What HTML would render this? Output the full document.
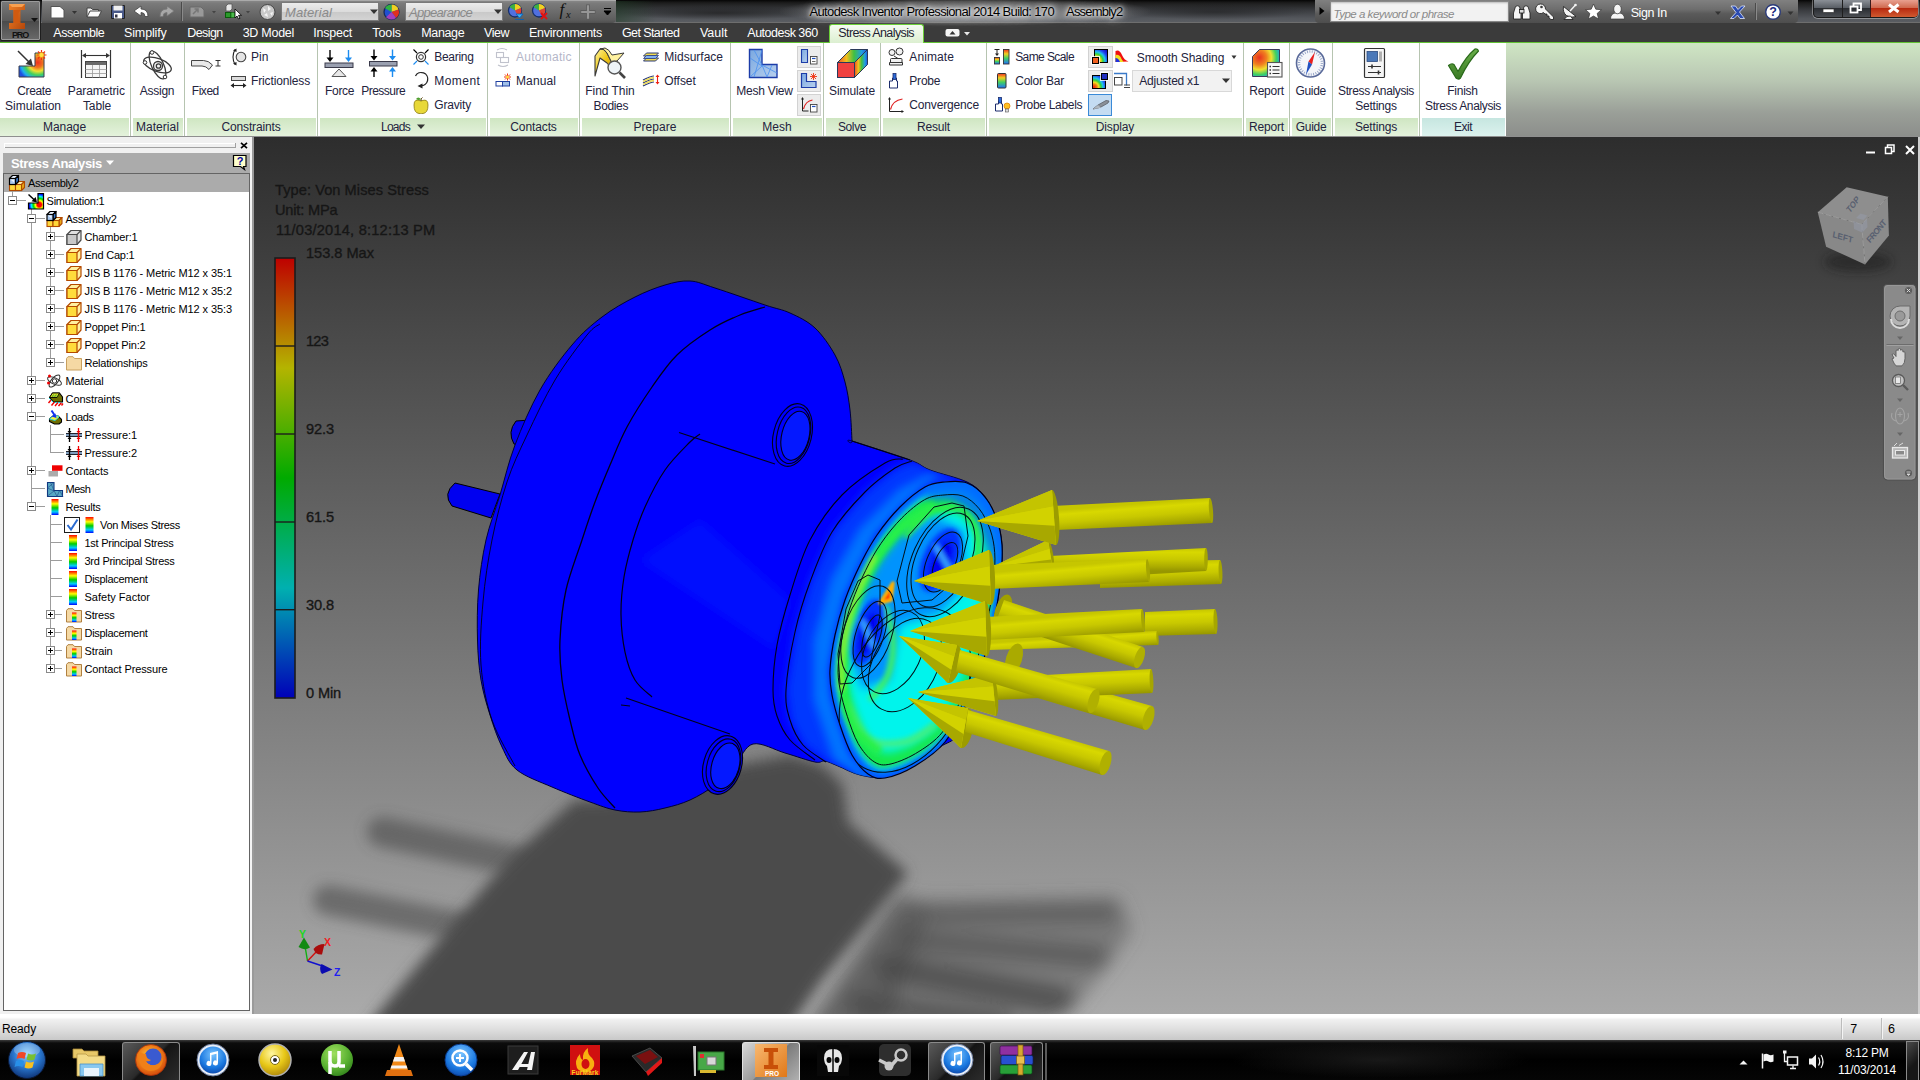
<!DOCTYPE html>
<html><head><meta charset="utf-8"><title>Autodesk Inventor Professional 2014 - Assembly2</title>
<style>
html,body{margin:0;padding:0;background:#3c3c3c;}
body{width:1920px;height:1080px;position:relative;overflow:hidden;font-family:"Liberation Sans",sans-serif;}
.b{position:absolute;display:block;}
.t{position:absolute;white-space:pre;line-height:normal;}
</style></head><body>
<div class="b" style="left:254px;top:137px;width:1666px;height:877px;background:linear-gradient(#2d2d2d 0%,#aaaaaa 100%);"></div>
<svg class="b" style="left:254px;top:137px" width="1666" height="877" viewBox="254 137 1666 877"><defs>
<filter id="bl18" filterUnits="userSpaceOnUse" x="254" y="137" width="1666" height="900"><feGaussianBlur stdDeviation="9"/></filter>
<filter id="bl8" filterUnits="userSpaceOnUse" x="254" y="137" width="1666" height="900"><feGaussianBlur stdDeviation="7"/></filter>
<filter id="bl6" filterUnits="userSpaceOnUse" x="254" y="137" width="1666" height="900"><feGaussianBlur stdDeviation="5"/></filter>
<filter id="bl2" filterUnits="userSpaceOnUse" x="254" y="137" width="1666" height="900"><feGaussianBlur stdDeviation="1.2"/></filter>
<filter id="bl3" filterUnits="userSpaceOnUse" x="254" y="137" width="1666" height="900"><feGaussianBlur stdDeviation="2.5"/></filter>
<linearGradient id="leg" x1="0" y1="0" x2="0" y2="1">
<stop offset="0" stop-color="#be0000"/><stop offset="0.25" stop-color="#b4b400"/><stop offset="0.5" stop-color="#00aa00"/><stop offset="0.75" stop-color="#00b0b0"/><stop offset="1" stop-color="#0000b8"/></linearGradient>
<linearGradient id="shY" x1="0" y1="0" x2="0" y2="1"><stop offset="0" stop-color="#e4e400"/><stop offset="0.45" stop-color="#d0d000"/><stop offset="1" stop-color="#9c9c00"/></linearGradient>
</defs>
<g filter="url(#bl8)" opacity=".5">
<path d="M382 832L520 862" stroke="#3c3c3c" stroke-width="30" stroke-linecap="round"/>
<path d="M328 900L465 928" stroke="#3c3c3c" stroke-width="30" stroke-linecap="round"/>
</g>
<g filter="url(#bl18)">
<path d="M898.0 895.0L930.0 905.0L885.0 1030.0L805.0 1030.0Z" fill="#585858" opacity=".85"/>
<path d="M915.0 903.0L1118.0 898.0L1132.0 930.0L1110.0 962.0L1080.0 1002.0L1040.0 1030.0L860.0 1030.0L890.0 962.0Z" fill="#565656" opacity=".5"/>
<path d="M928 913L1108 911" stroke="#505050" stroke-width="22" stroke-linecap="round" opacity=".6"/>
<path d="M908 940L1098 957" stroke="#4c4c4c" stroke-width="22" stroke-linecap="round" opacity=".65"/>
<path d="M888 968L1060 1000" stroke="#464646" stroke-width="28" stroke-linecap="round" opacity=".75"/>
<path d="M860 1004L1000 1024" stroke="#484848" stroke-width="26" stroke-linecap="round" opacity=".7"/>
</g>
<g filter="url(#bl8)">
<path d="M602.0 800.0L640.0 790.0L735.0 765.0L790.0 755.0L822.0 765.0L843.0 785.0L848.0 822.0L908.0 873.0L822.0 980.0L788.0 1030.0L365.0 1030.0L379.0 1012.0L435.0 945.0L494.0 876.0L530.0 840.0L575.0 800.0Z" fill="#4b4b4b"/>
</g>
<path d="M455 483 L500 494 L491 518 L452 506 Q442 494 455 483Z" fill="#0000f0" stroke="#000" stroke-width="1"/>
<path d="M516 421 L530 420 L522 446 L514 444 Q507 432 516 421Z" fill="#0000f0" stroke="#000" stroke-width="1"/>
<path d="M690.0 281.0C698.3 281.5 702.5 284.0 715.0 288.0C727.5 292.0 752.5 300.8 765.0 305.0C777.5 309.2 781.7 309.2 790.0 313.0C798.3 316.8 807.5 321.0 815.0 328.0C822.5 335.0 830.0 346.0 835.0 355.0C840.0 364.0 842.5 372.8 845.0 382.0C847.5 391.2 848.8 400.2 850.0 410.0C851.2 419.8 851.7 435.8 852.0 441.0C852.3 446.2 842.3 437.8 852.0 441.0C861.7 444.2 897.0 455.2 910.0 460.0C923.0 464.8 920.5 466.3 930.0 470.0C939.5 473.7 957.8 477.5 967.0 482.0C976.2 486.5 980.0 490.7 985.0 497.0C990.0 503.3 994.2 512.0 997.0 520.0C999.8 528.0 1001.3 535.8 1002.0 545.0C1002.7 554.2 1002.0 564.2 1001.0 575.0C1000.0 585.8 998.7 596.7 996.0 610.0C993.3 623.3 989.7 640.0 985.0 655.0C980.3 670.0 972.7 686.7 968.0 700.0C963.3 713.3 961.7 727.2 957.0 735.0C952.3 742.8 947.0 742.0 940.0 747.0C933.0 752.0 924.2 760.0 915.0 765.0C905.8 770.0 894.2 775.3 885.0 777.0C875.8 778.7 867.8 776.8 860.0 775.0C852.2 773.2 843.8 768.3 838.0 766.0C832.2 763.7 828.8 761.7 825.0 761.0C821.2 760.3 821.7 763.3 815.0 762.0C808.3 760.7 795.3 756.0 785.0 753.0C774.7 750.0 761.3 742.0 753.0 744.0C744.7 746.0 741.3 758.2 735.0 765.0C728.7 771.8 722.5 779.2 715.0 785.0C707.5 790.8 698.3 796.2 690.0 800.0C681.7 803.8 673.3 806.0 665.0 808.0C656.7 810.0 648.3 811.7 640.0 812.0C631.7 812.3 623.3 811.7 615.0 810.0C606.7 808.3 600.5 805.8 590.0 802.0C579.5 798.2 564.2 792.3 552.0 787.0C539.8 781.7 525.3 776.7 517.0 770.0C508.7 763.3 506.5 756.2 502.0 747.0C497.5 737.8 493.5 726.2 490.0 715.0C486.5 703.8 483.1 692.5 481.0 680.0C478.9 667.5 477.9 655.0 477.5 640.0C477.1 625.0 477.1 606.7 478.5 590.0C479.9 573.3 482.4 555.8 486.0 540.0C489.6 524.2 495.2 510.8 500.0 495.0C504.8 479.2 508.3 462.5 515.0 445.0C521.7 427.5 530.5 406.7 540.0 390.0C549.5 373.3 561.7 357.2 572.0 345.0C582.3 332.8 591.5 325.0 602.0 317.0C612.5 309.0 624.5 302.3 635.0 297.0C645.5 291.7 655.8 287.7 665.0 285.0C674.2 282.3 681.7 280.5 690.0 281.0Z" fill="#0000fe" stroke="#00003a" stroke-width="1"/>
<clipPath id="cSil"><path d="M690.0 281.0C698.3 281.5 702.5 284.0 715.0 288.0C727.5 292.0 752.5 300.8 765.0 305.0C777.5 309.2 781.7 309.2 790.0 313.0C798.3 316.8 807.5 321.0 815.0 328.0C822.5 335.0 830.0 346.0 835.0 355.0C840.0 364.0 842.5 372.8 845.0 382.0C847.5 391.2 848.8 400.2 850.0 410.0C851.2 419.8 851.7 435.8 852.0 441.0C852.3 446.2 842.3 437.8 852.0 441.0C861.7 444.2 897.0 455.2 910.0 460.0C923.0 464.8 920.5 466.3 930.0 470.0C939.5 473.7 957.8 477.5 967.0 482.0C976.2 486.5 980.0 490.7 985.0 497.0C990.0 503.3 994.2 512.0 997.0 520.0C999.8 528.0 1001.3 535.8 1002.0 545.0C1002.7 554.2 1002.0 564.2 1001.0 575.0C1000.0 585.8 998.7 596.7 996.0 610.0C993.3 623.3 989.7 640.0 985.0 655.0C980.3 670.0 972.7 686.7 968.0 700.0C963.3 713.3 961.7 727.2 957.0 735.0C952.3 742.8 947.0 742.0 940.0 747.0C933.0 752.0 924.2 760.0 915.0 765.0C905.8 770.0 894.2 775.3 885.0 777.0C875.8 778.7 867.8 776.8 860.0 775.0C852.2 773.2 843.8 768.3 838.0 766.0C832.2 763.7 828.8 761.7 825.0 761.0C821.2 760.3 821.7 763.3 815.0 762.0C808.3 760.7 795.3 756.0 785.0 753.0C774.7 750.0 761.3 742.0 753.0 744.0C744.7 746.0 741.3 758.2 735.0 765.0C728.7 771.8 722.5 779.2 715.0 785.0C707.5 790.8 698.3 796.2 690.0 800.0C681.7 803.8 673.3 806.0 665.0 808.0C656.7 810.0 648.3 811.7 640.0 812.0C631.7 812.3 623.3 811.7 615.0 810.0C606.7 808.3 600.5 805.8 590.0 802.0C579.5 798.2 564.2 792.3 552.0 787.0C539.8 781.7 525.3 776.7 517.0 770.0C508.7 763.3 506.5 756.2 502.0 747.0C497.5 737.8 493.5 726.2 490.0 715.0C486.5 703.8 483.1 692.5 481.0 680.0C478.9 667.5 477.9 655.0 477.5 640.0C477.1 625.0 477.1 606.7 478.5 590.0C479.9 573.3 482.4 555.8 486.0 540.0C489.6 524.2 495.2 510.8 500.0 495.0C504.8 479.2 508.3 462.5 515.0 445.0C521.7 427.5 530.5 406.7 540.0 390.0C549.5 373.3 561.7 357.2 572.0 345.0C582.3 332.8 591.5 325.0 602.0 317.0C612.5 309.0 624.5 302.3 635.0 297.0C645.5 291.7 655.8 287.7 665.0 285.0C674.2 282.3 681.7 280.5 690.0 281.0Z"/></clipPath>
<clipPath id="cFace"><path d="M925.0 487.0C932.5 482.8 938.0 482.7 945.0 482.0C952.0 481.3 960.3 480.5 967.0 483.0C973.7 485.5 980.0 490.8 985.0 497.0C990.0 503.2 994.2 512.0 997.0 520.0C999.8 528.0 1001.3 535.8 1002.0 545.0C1002.7 554.2 1002.0 564.2 1001.0 575.0C1000.0 585.8 998.7 596.7 996.0 610.0C993.3 623.3 989.7 640.0 985.0 655.0C980.3 670.0 974.7 685.5 968.0 700.0C961.3 714.5 953.8 731.0 945.0 742.0C936.2 753.0 925.0 760.0 915.0 766.0C905.0 772.0 892.8 776.7 885.0 778.0C877.2 779.3 873.5 777.8 868.0 774.0C862.5 770.2 856.7 763.2 852.0 755.0C847.3 746.8 843.3 735.0 840.0 725.0C836.7 715.0 833.7 704.2 832.0 695.0C830.3 685.8 829.5 680.0 830.0 670.0C830.5 660.0 832.5 646.7 835.0 635.0C837.5 623.3 840.8 611.7 845.0 600.0C849.2 588.3 854.7 575.8 860.0 565.0C865.3 554.2 870.3 544.7 877.0 535.0C883.7 525.3 892.0 515.0 900.0 507.0C908.0 499.0 917.5 491.2 925.0 487.0Z"/></clipPath>
<g clip-path="url(#cSil)">
<g filter="url(#bl6)">
<path d="M912.0 461.0L895.0 468.0L865.0 492.0L832.0 532.0L810.0 582.0L795.0 632.0L786.0 690.0L790.0 720.0L803.0 745.0L826.0 762.0L860.0 775.0L885.0 778.0L852.0 755.0L832.0 695.0L830.0 670.0L845.0 600.0L877.0 535.0L925.0 487.0L967.0 483.0Z" fill="#0038ff"/>
<path d="M925.0 487.0L900.0 507.0L877.0 535.0L860.0 565.0L845.0 600.0L835.0 635.0L830.0 670.0L832.0 695.0L840.0 725.0L852.0 755.0L868.0 774.0L885.0 778.0L870.0 790.0L835.0 760.0L815.0 700.0L815.0 640.0L832.0 580.0L860.0 530.0L900.0 490.0L940.0 470.0Z" fill="#0088ff" opacity="0.75"/>
<path d="M640.0 560.0L700.0 520.0L790.0 600.0L775.0 650.0L700.0 600.0Z" fill="#0028ff" opacity="0.35"/>
</g></g>
<g clip-path="url(#cFace)">
<path d="M925.0 487.0C932.5 482.8 938.0 482.7 945.0 482.0C952.0 481.3 960.3 480.5 967.0 483.0C973.7 485.5 980.0 490.8 985.0 497.0C990.0 503.2 994.2 512.0 997.0 520.0C999.8 528.0 1001.3 535.8 1002.0 545.0C1002.7 554.2 1002.0 564.2 1001.0 575.0C1000.0 585.8 998.7 596.7 996.0 610.0C993.3 623.3 989.7 640.0 985.0 655.0C980.3 670.0 974.7 685.5 968.0 700.0C961.3 714.5 953.8 731.0 945.0 742.0C936.2 753.0 925.0 760.0 915.0 766.0C905.0 772.0 892.8 776.7 885.0 778.0C877.2 779.3 873.5 777.8 868.0 774.0C862.5 770.2 856.7 763.2 852.0 755.0C847.3 746.8 843.3 735.0 840.0 725.0C836.7 715.0 833.7 704.2 832.0 695.0C830.3 685.8 829.5 680.0 830.0 670.0C830.5 660.0 832.5 646.7 835.0 635.0C837.5 623.3 840.8 611.7 845.0 600.0C849.2 588.3 854.7 575.8 860.0 565.0C865.3 554.2 870.3 544.7 877.0 535.0C883.7 525.3 892.0 515.0 900.0 507.0C908.0 499.0 917.5 491.2 925.0 487.0Z" fill="#0058ff"/>
<g filter="url(#bl3)">
<path d="M924.7 493.1C931.9 489.1 937.2 489.0 943.9 488.3C950.6 487.7 958.6 486.9 965.0 489.3C971.4 491.7 977.5 496.8 982.3 502.7C987.1 508.6 991.1 517.1 993.8 524.8C996.5 532.5 998.0 540.0 998.6 548.8C999.2 557.6 998.6 567.2 997.6 577.6C996.7 588.0 995.4 598.4 992.8 611.2C990.3 624.0 986.8 640.0 982.3 654.4C977.8 668.8 972.4 683.7 966.0 697.6C959.6 711.5 952.4 727.4 943.9 737.9C935.4 748.5 924.7 755.2 915.1 761.0C905.5 766.7 893.8 771.2 886.3 772.5C878.8 773.8 875.2 772.3 870.0 768.6C864.7 765.0 859.1 758.2 854.6 750.4C850.1 742.6 846.3 731.2 843.1 721.6C839.9 712.0 837.0 701.6 835.4 692.8C833.8 684.0 833.0 678.4 833.5 668.8C834.0 659.2 835.9 646.4 838.3 635.2C840.7 624.0 843.9 612.8 847.9 601.6C851.9 590.4 857.2 578.4 862.3 568.0C867.4 557.6 872.2 548.5 878.6 539.2C885.0 529.9 893.0 520.0 900.7 512.3C908.4 504.6 917.5 497.1 924.7 493.1Z" fill="#00a0ff"/>
<path d="M924.4 497.7C931.4 493.8 936.5 493.7 943.0 493.1C949.5 492.4 957.3 491.7 963.5 494.0C969.7 496.3 975.6 501.3 980.2 507.0C984.9 512.7 988.8 521.0 991.4 528.4C994.0 535.8 995.4 543.1 996.0 551.6C996.7 560.2 996.0 569.5 995.1 579.5C994.2 589.6 993.0 599.7 990.5 612.1C988.0 624.5 984.6 640.0 980.2 654.0C975.9 667.9 970.6 682.3 964.4 695.8C958.2 709.3 951.3 724.6 943.0 734.9C934.8 745.1 924.4 751.6 915.1 757.2C905.8 762.8 894.5 767.1 887.2 768.3C880.0 769.6 876.5 768.2 871.4 764.6C866.3 761.1 860.9 754.5 856.5 747.0C852.2 739.4 848.5 728.3 845.4 719.0C842.3 709.8 839.5 699.7 838.0 691.1C836.4 682.6 835.6 677.2 836.1 667.9C836.6 658.6 838.4 646.2 840.7 635.4C843.1 624.5 846.2 613.6 850.0 602.8C853.9 591.9 859.0 580.3 864.0 570.2C869.0 560.2 873.6 551.3 879.8 542.4C886.0 533.4 893.8 523.8 901.2 516.3C908.6 508.9 917.5 501.6 924.4 497.7Z" fill="#18e848"/>
</g>
<g filter="url(#bl6)">
<path d="M923.5 516.5C929.6 513.1 934.0 512.9 939.7 512.4C945.3 511.9 952.1 511.2 957.5 513.2C962.9 515.2 968.0 519.6 972.1 524.5C976.1 529.5 979.5 536.7 981.8 543.2C984.1 549.7 985.3 556.0 985.9 563.4C986.4 570.9 985.8 579.0 985.0 587.7C984.2 596.5 983.1 605.3 981.0 616.1C978.8 626.9 975.9 640.4 972.1 652.5C968.3 664.7 963.7 677.2 958.3 689.0C952.9 700.7 946.8 714.1 939.7 723.0C932.5 731.9 923.5 737.6 915.4 742.4C907.3 747.3 897.4 751.1 891.1 752.2C884.7 753.2 881.8 752.0 877.3 748.9C872.9 745.8 868.1 740.1 864.4 733.5C860.6 726.9 857.3 717.3 854.6 709.2C851.9 701.1 849.5 692.4 848.1 684.9C846.8 677.5 846.1 672.8 846.5 664.7C846.9 656.6 848.6 645.8 850.6 636.3C852.6 626.9 855.3 617.4 858.7 608.0C862.1 598.5 866.5 588.4 870.8 579.6C875.2 570.9 879.2 563.2 884.6 555.3C890.0 547.5 896.8 539.1 903.2 532.6C909.7 526.2 917.4 519.8 923.5 516.5Z" fill="#00f4ec"/>
<path d="M925.0 470.0L1010.0 470.0L1010.0 600.0L990.0 560.0L975.0 520.0L950.0 500.0L925.0 500.0Z" fill="#0070ff" opacity=".85"/>
<path d="M935.0 515.0L965.0 530.0L968.0 585.0L940.0 615.0L900.0 625.0L890.0 680.0L862.0 690.0L846.0 650.0L856.0 600.0L880.0 560.0L905.0 530.0Z" fill="#0088ff" opacity=".9"/>
</g>
<g filter="url(#bl3)">
<path d="M905.0 537.0C909.2 532.8 921.2 516.8 930.0 512.0C938.8 507.2 950.7 505.8 958.0 508.0C965.3 510.2 970.7 518.0 974.0 525.0C977.3 532.0 978.7 540.8 978.0 550.0C977.3 559.2 971.3 575.0 970.0 580.0" fill="none" stroke="#30f040" stroke-width="6"/>
<path d="M885.0 605.0C886.3 610.8 892.5 628.3 893.0 640.0C893.5 651.7 891.8 665.0 888.0 675.0C884.2 685.0 873.0 695.8 870.0 700.0" fill="none" stroke="#40f060" stroke-width="6"/>
<path d="M846.0 700.0C849.7 706.3 858.2 731.0 868.0 738.0C877.8 745.0 893.8 744.2 905.0 742.0C916.2 739.8 930.0 727.8 935.0 725.0" fill="none" stroke="#50f070" stroke-width="7" opacity=".8"/>
<path d="M935.0 505.0C930.0 508.2 914.5 515.5 905.0 524.0C895.5 532.5 886.0 543.3 878.0 556.0C870.0 568.7 862.5 584.3 857.0 600.0C851.5 615.7 847.2 634.2 845.0 650.0C842.8 665.8 842.2 681.7 844.0 695.0C845.8 708.3 850.0 720.5 856.0 730.0C862.0 739.5 876.0 748.3 880.0 752.0" fill="none" stroke="#28f048" stroke-width="9"/>
<path d="M874.0 556.0C870.7 563.3 859.3 584.7 854.0 600.0C848.7 615.3 844.2 633.0 842.0 648.0C839.8 663.0 841.2 683.0 841.0 690.0" fill="none" stroke="#b8f000" stroke-width="3"/>
<ellipse cx="940" cy="560" rx="17" ry="34" transform="rotate(24 940 560)" fill="#0030ff"/>
<ellipse cx="941" cy="562" rx="9" ry="22" transform="rotate(24 941 562)" fill="#0000f0"/>
<ellipse cx="868" cy="632" rx="15" ry="34" transform="rotate(18 868 632)" fill="#0030ff"/>
<ellipse cx="868" cy="634" rx="8" ry="22" transform="rotate(18 868 634)" fill="#0000f0"/>
<path d="M935 545 L950 570" stroke="#40c0ff" stroke-width="4"/><path d="M862 620 L874 648" stroke="#40c0ff" stroke-width="4"/>
</g>
<g filter="url(#bl2)"><path d="M880 603 L893 583 L891 600Z" fill="#ff2000" stroke="#ffb000" stroke-width="3.5" stroke-linejoin="round"/></g>
</g>
<path d="M765.0 307.0C760.8 308.3 749.2 311.2 740.0 315.0C730.8 318.8 720.5 323.3 710.0 330.0C699.5 336.7 686.7 345.5 677.0 355.0C667.3 364.5 660.3 375.0 652.0 387.0C643.7 399.0 634.0 414.0 627.0 427.0C620.0 440.0 615.3 452.5 610.0 465.0C604.7 477.5 599.7 489.5 595.0 502.0C590.3 514.5 586.8 525.3 582.0 540.0C577.2 554.7 569.7 573.3 566.0 590.0C562.3 606.7 560.7 625.0 560.0 640.0C559.3 655.0 560.3 666.7 562.0 680.0C563.7 693.3 567.0 707.5 570.0 720.0C573.0 732.5 575.3 743.7 580.0 755.0C584.7 766.3 592.2 779.2 598.0 788.0C603.8 796.8 612.2 804.7 615.0 808.0" fill="none" stroke="#000018" stroke-width="1.3"/>
<path d="M600.0 324.0C597.8 325.8 594.5 325.7 587.0 335.0C579.5 344.3 565.0 363.3 555.0 380.0C545.0 396.7 535.0 418.0 527.0 435.0C519.0 452.0 512.8 464.5 507.0 482.0C501.2 499.5 496.0 520.0 492.0 540.0C488.0 560.0 484.8 581.2 483.0 602.0C481.2 622.8 479.5 645.3 481.0 665.0C482.5 684.7 486.3 703.2 492.0 720.0C497.7 736.8 511.2 758.3 515.0 766.0" fill="none" stroke="#000018" stroke-width="0.9"/>
<path d="M700.0 434.0C698.3 435.3 695.8 436.0 690.0 442.0C684.2 448.0 672.5 459.2 665.0 470.0C657.5 480.8 650.3 495.3 645.0 507.0C639.7 518.7 636.5 528.3 633.0 540.0C629.5 551.7 626.0 564.5 624.0 577.0C622.0 589.5 620.8 602.5 621.0 615.0C621.2 627.5 622.7 641.2 625.0 652.0C627.3 662.8 630.5 672.5 635.0 680.0C639.5 687.5 649.2 694.2 652.0 697.0" fill="none" stroke="#000018" stroke-width="1.2"/>
<path d="M903.0 459.0C900.0 459.7 895.2 457.0 885.0 463.0C874.8 469.0 854.5 482.2 842.0 495.0C829.5 507.8 818.7 523.3 810.0 540.0C801.3 556.7 795.5 577.5 790.0 595.0C784.5 612.5 779.8 629.2 777.0 645.0C774.2 660.8 773.0 678.2 773.0 690.0C773.0 701.8 774.2 707.7 777.0 716.0C779.8 724.3 783.7 732.7 790.0 740.0C796.3 747.3 810.8 756.7 815.0 760.0" fill="none" stroke="#000018" stroke-width="1.1"/>
<path d="M912.0 461.0C909.2 462.2 902.8 462.8 895.0 468.0C887.2 473.2 875.5 481.3 865.0 492.0C854.5 502.7 841.2 517.0 832.0 532.0C822.8 547.0 816.2 565.3 810.0 582.0C803.8 598.7 799.0 614.0 795.0 632.0C791.0 650.0 786.8 675.3 786.0 690.0C785.2 704.7 787.2 710.8 790.0 720.0C792.8 729.2 797.0 738.0 803.0 745.0C809.0 752.0 822.2 759.2 826.0 762.0" fill="none" stroke="#000018" stroke-width="1.1"/>
<path d="M925.0 487.0C932.5 482.8 938.0 482.7 945.0 482.0C952.0 481.3 960.3 480.5 967.0 483.0C973.7 485.5 980.0 490.8 985.0 497.0C990.0 503.2 994.2 512.0 997.0 520.0C999.8 528.0 1001.3 535.8 1002.0 545.0C1002.7 554.2 1002.0 564.2 1001.0 575.0C1000.0 585.8 998.7 596.7 996.0 610.0C993.3 623.3 989.7 640.0 985.0 655.0C980.3 670.0 974.7 685.5 968.0 700.0C961.3 714.5 953.8 731.0 945.0 742.0C936.2 753.0 925.0 760.0 915.0 766.0C905.0 772.0 892.8 776.7 885.0 778.0C877.2 779.3 873.5 777.8 868.0 774.0C862.5 770.2 856.7 763.2 852.0 755.0C847.3 746.8 843.3 735.0 840.0 725.0C836.7 715.0 833.7 704.2 832.0 695.0C830.3 685.8 829.5 680.0 830.0 670.0C830.5 660.0 832.5 646.7 835.0 635.0C837.5 623.3 840.8 611.7 845.0 600.0C849.2 588.3 854.7 575.8 860.0 565.0C865.3 554.2 870.3 544.7 877.0 535.0C883.7 525.3 892.0 515.0 900.0 507.0C908.0 499.0 917.5 491.2 925.0 487.0Z" fill="none" stroke="#000018" stroke-width="1.2"/>
<path d="M679 432.5 L775 464 M626 698 L730 734 M621 705 L630 706 M852 441 L910 460" stroke="#000018" stroke-width="1.1" fill="none"/>
<g transform="rotate(14 792.5 435)" fill="none" stroke="#000018" stroke-width="1.1"><ellipse cx="792.5" cy="435" rx="19" ry="32" fill="#0000ff"/><ellipse cx="795.5" cy="435" rx="13.7" ry="25.0" fill="#0418ff"/><ellipse cx="793.5" cy="435" rx="16.3" ry="28.8"/></g>
<g transform="rotate(16 722.5 765)" fill="none" stroke="#000018" stroke-width="1.1"><ellipse cx="722.5" cy="765" rx="19" ry="30" fill="#0000ff"/><ellipse cx="725.5" cy="765" rx="13.7" ry="23.4" fill="#0418ff"/><ellipse cx="723.5" cy="765" rx="16.3" ry="27.0"/></g>
<g clip-path="url(#cFace)"><g fill="none" stroke="#001018" stroke-width="1"><path d="M924.6 499.7C931.5 495.9 936.5 495.7 942.8 495.1C949.2 494.5 956.8 493.8 962.9 496.0C968.9 498.3 974.7 503.2 979.2 508.8C983.8 514.4 987.6 522.4 990.2 529.7C992.7 537.0 994.1 544.1 994.7 552.5C995.3 560.8 994.7 569.9 993.8 579.8C992.9 589.6 991.7 599.5 989.2 611.6C986.8 623.8 983.5 638.9 979.2 652.6C975.0 666.2 969.8 680.3 963.8 693.5C957.7 706.7 950.9 721.7 942.8 731.7C934.8 741.8 924.6 748.1 915.5 753.6C906.4 759.0 895.4 763.3 888.2 764.5C881.1 765.7 877.8 764.3 872.8 760.9C867.8 757.4 862.5 751.0 858.2 743.6C854.0 736.1 850.3 725.4 847.3 716.3C844.3 707.2 841.5 697.3 840.0 689.0C838.5 680.6 837.7 675.3 838.2 666.2C838.6 657.1 840.5 645.0 842.7 634.4C845.0 623.8 848.0 613.1 851.8 602.5C855.6 591.9 860.6 580.5 865.5 570.7C870.3 560.8 874.9 552.2 881.0 543.4C887.0 534.6 894.6 525.2 901.9 517.9C909.2 510.6 917.8 503.5 924.6 499.7Z"/><ellipse cx="943" cy="560" rx="27" ry="50" transform="rotate(24 943 560)"/><ellipse cx="945" cy="562" rx="33" ry="58" transform="rotate(24 945 562)"/><ellipse cx="943" cy="562" rx="16" ry="32" transform="rotate(24 943 562)"/><ellipse cx="945" cy="563" rx="10" ry="22" transform="rotate(24 945 563)"/><ellipse cx="868" cy="632" rx="24" ry="48" transform="rotate(18 868 632)"/><ellipse cx="870" cy="634" rx="14" ry="34" transform="rotate(18 870 634)"/><ellipse cx="872" cy="636" rx="8" ry="22" transform="rotate(18 872 636)"/><ellipse cx="893" cy="652" rx="28" ry="44" transform="rotate(25 893 652)"/><ellipse cx="905" cy="665" rx="32" ry="50" transform="rotate(28 905 665)"/><ellipse cx="905" cy="690" rx="58" ry="88" transform="rotate(28 905 690)"/><path d="M952 503l12 3l4 30l-10 42l-26 22l-30 3l-5-22l12-46l25-28z"/><path d="M868 575l12 5l0 35l-10 50l-18 18l-12 1l-2-30l8-45l12-28z"/></g></g>
<g>
<linearGradient id="ag1" gradientUnits="userSpaceOnUse" x1="1220.0" y1="560.0" x2="1221.0" y2="584.0"><stop offset="0" stop-color="#c6c600"/><stop offset=".18" stop-color="#d8d800"/><stop offset=".5" stop-color="#c8c800"/><stop offset=".8" stop-color="#acac00"/><stop offset="1" stop-color="#969600"/></linearGradient>
<path d="M1100.0 562.0L1220.0 560.0L1221.0 584.0L1100.0 588.0Z" fill="url(#ag1)"/>
<ellipse cx="1220.5" cy="572.0" rx="1.9" ry="12.0" transform="rotate(-2.4 1220.5 572.0)" fill="#a6a600"/>
<linearGradient id="ag2" gradientUnits="userSpaceOnUse" x1="1206.0" y1="548.0" x2="1206.0" y2="571.0"><stop offset="0" stop-color="#c6c600"/><stop offset=".18" stop-color="#d8d800"/><stop offset=".5" stop-color="#c8c800"/><stop offset=".8" stop-color="#acac00"/><stop offset="1" stop-color="#969600"/></linearGradient>
<path d="M1050.0 556.0L1206.0 548.0L1206.0 571.0L1050.0 580.0Z" fill="url(#ag2)"/>
<ellipse cx="1206.0" cy="559.5" rx="1.8" ry="11.5" transform="rotate(0.0 1206.0 559.5)" fill="#a6a600"/>
<ellipse cx="1050.5" cy="555.0" rx="2.7" ry="15.2" transform="rotate(-9.5 1050.5 555.0)" fill="#9c9c00"/>
<path d="M992.0 567.0L1048.0 540.0L1053.0 570.0Z" fill="#d2d200"/>
<path d="M992.0 567.0L1048.0 540.0L1049.5 549.0Z" fill="#c4c400"/>
<path d="M992.0 567.0L1049.5 549.0L1051.2 559.5Z" fill="#d2d200"/>
<path d="M992.0 567.0L1051.2 559.5L1053.0 570.0Z" fill="#a8a800"/>
<linearGradient id="ag3" gradientUnits="userSpaceOnUse" x1="1215.0" y1="609.0" x2="1216.0" y2="634.0"><stop offset="0" stop-color="#c6c600"/><stop offset=".18" stop-color="#d8d800"/><stop offset=".5" stop-color="#c8c800"/><stop offset=".8" stop-color="#acac00"/><stop offset="1" stop-color="#969600"/></linearGradient>
<path d="M1145.0 612.0L1215.0 609.0L1216.0 634.0L1145.0 636.0Z" fill="url(#ag3)"/>
<ellipse cx="1215.5" cy="621.5" rx="2.0" ry="12.5" transform="rotate(-2.3 1215.5 621.5)" fill="#a6a600"/>
<linearGradient id="ag4" gradientUnits="userSpaceOnUse" x1="1157.0" y1="631.0" x2="1158.0" y2="645.0"><stop offset="0" stop-color="#c6c600"/><stop offset=".18" stop-color="#d8d800"/><stop offset=".5" stop-color="#c8c800"/><stop offset=".8" stop-color="#acac00"/><stop offset="1" stop-color="#969600"/></linearGradient>
<path d="M988.0 636.0L1157.0 631.0L1158.0 645.0L988.0 650.0Z" fill="url(#ag4)"/>
<ellipse cx="1157.5" cy="638.0" rx="1.1" ry="7.0" transform="rotate(-4.1 1157.5 638.0)" fill="#a6a600"/>
<linearGradient id="ag5" gradientUnits="userSpaceOnUse" x1="1210.0" y1="498.0" x2="1212.0" y2="523.0"><stop offset="0" stop-color="#c6c600"/><stop offset=".18" stop-color="#d8d800"/><stop offset=".5" stop-color="#c8c800"/><stop offset=".8" stop-color="#acac00"/><stop offset="1" stop-color="#969600"/></linearGradient>
<path d="M1052.0 506.0L1210.0 498.0L1212.0 523.0L1056.0 530.0Z" fill="url(#ag5)"/>
<ellipse cx="1211.0" cy="510.5" rx="2.0" ry="12.5" transform="rotate(-4.6 1211.0 510.5)" fill="#a6a600"/>
<ellipse cx="1054.0" cy="517.5" rx="5.0" ry="27.6" transform="rotate(-4.2 1054.0 517.5)" fill="#9c9c00"/>
<path d="M977.0 521.0L1052.0 490.0L1056.0 545.0Z" fill="#d2d200"/>
<path d="M977.0 521.0L1052.0 490.0L1053.2 506.5Z" fill="#c4c400"/>
<path d="M977.0 521.0L1053.2 506.5L1054.6 525.8Z" fill="#d2d200"/>
<path d="M977.0 521.0L1054.6 525.8L1056.0 545.0Z" fill="#a8a800"/>
<ellipse cx="1003" cy="611" rx="8" ry="17" transform="rotate(18 1003 611)" fill="#a0a000"/>
<linearGradient id="ag6" gradientUnits="userSpaceOnUse" x1="1143.0" y1="647.0" x2="1136.0" y2="668.0"><stop offset="0" stop-color="#c6c600"/><stop offset=".18" stop-color="#d8d800"/><stop offset=".5" stop-color="#c8c800"/><stop offset=".8" stop-color="#acac00"/><stop offset="1" stop-color="#969600"/></linearGradient>
<path d="M1004.0 600.0L1143.0 647.0L1136.0 668.0L996.0 622.0Z" fill="url(#ag6)"/>
<ellipse cx="1139.5" cy="657.5" rx="4.6" ry="11.1" transform="rotate(18.4 1139.5 657.5)" fill="#b0b000"/>
<ellipse cx="1014" cy="659" rx="8" ry="16" transform="rotate(18 1014 659)" fill="#aaaa00"/>
<linearGradient id="ag7" gradientUnits="userSpaceOnUse" x1="1152.0" y1="706.0" x2="1145.0" y2="730.0"><stop offset="0" stop-color="#c6c600"/><stop offset=".18" stop-color="#d8d800"/><stop offset=".5" stop-color="#c8c800"/><stop offset=".8" stop-color="#acac00"/><stop offset="1" stop-color="#969600"/></linearGradient>
<path d="M1010.0 666.0L1152.0 706.0L1145.0 730.0L1004.0 688.0Z" fill="url(#ag7)"/>
<ellipse cx="1148.5" cy="718.0" rx="5.2" ry="12.5" transform="rotate(16.3 1148.5 718.0)" fill="#b0b000"/>
<linearGradient id="ag8" gradientUnits="userSpaceOnUse" x1="1151.0" y1="669.0" x2="1152.0" y2="693.0"><stop offset="0" stop-color="#c6c600"/><stop offset=".18" stop-color="#d8d800"/><stop offset=".5" stop-color="#c8c800"/><stop offset=".8" stop-color="#acac00"/><stop offset="1" stop-color="#969600"/></linearGradient>
<path d="M992.0 678.0L1151.0 669.0L1152.0 693.0L994.0 700.0Z" fill="url(#ag8)"/>
<ellipse cx="1151.5" cy="681.0" rx="1.9" ry="12.0" transform="rotate(-2.4 1151.5 681.0)" fill="#a6a600"/>
<ellipse cx="994.0" cy="695.0" rx="3.8" ry="21.1" transform="rotate(-5.4 994.0 695.0)" fill="#9c9c00"/>
<path d="M918.0 692.0L992.0 674.0L996.0 716.0Z" fill="#d2d200"/>
<path d="M918.0 692.0L992.0 674.0L993.2 686.6Z" fill="#c4c400"/>
<path d="M918.0 692.0L993.2 686.6L994.6 701.3Z" fill="#d2d200"/>
<path d="M918.0 692.0L994.6 701.3L996.0 716.0Z" fill="#a8a800"/>
<linearGradient id="ag9" gradientUnits="userSpaceOnUse" x1="1147.0" y1="559.0" x2="1149.0" y2="582.0"><stop offset="0" stop-color="#c6c600"/><stop offset=".18" stop-color="#d8d800"/><stop offset=".5" stop-color="#c8c800"/><stop offset=".8" stop-color="#acac00"/><stop offset="1" stop-color="#969600"/></linearGradient>
<path d="M990.0 565.0L1147.0 559.0L1149.0 582.0L990.0 589.0Z" fill="url(#ag9)"/>
<ellipse cx="1148.0" cy="570.5" rx="1.8" ry="11.5" transform="rotate(-5.0 1148.0 570.5)" fill="#a6a600"/>
<ellipse cx="990.0" cy="577.5" rx="5.0" ry="27.5" transform="rotate(-2.1 990.0 577.5)" fill="#9c9c00"/>
<path d="M914.0 581.0L989.0 550.0L991.0 605.0Z" fill="#d2d200"/>
<path d="M914.0 581.0L989.0 550.0L989.6 566.5Z" fill="#c4c400"/>
<path d="M914.0 581.0L989.6 566.5L990.3 585.8Z" fill="#d2d200"/>
<path d="M914.0 581.0L990.3 585.8L991.0 605.0Z" fill="#a8a800"/>
<linearGradient id="ag10" gradientUnits="userSpaceOnUse" x1="1142.0" y1="609.0" x2="1144.0" y2="632.0"><stop offset="0" stop-color="#c6c600"/><stop offset=".18" stop-color="#d8d800"/><stop offset=".5" stop-color="#c8c800"/><stop offset=".8" stop-color="#acac00"/><stop offset="1" stop-color="#969600"/></linearGradient>
<path d="M985.0 617.0L1142.0 609.0L1144.0 632.0L986.0 640.0Z" fill="url(#ag10)"/>
<ellipse cx="1143.0" cy="620.5" rx="1.8" ry="11.5" transform="rotate(-5.0 1143.0 620.5)" fill="#a6a600"/>
<ellipse cx="986.0" cy="628.5" rx="5.0" ry="27.5" transform="rotate(-2.1 986.0 628.5)" fill="#9c9c00"/>
<path d="M910.0 631.0L985.0 601.0L987.0 656.0Z" fill="#d2d200"/>
<path d="M910.0 631.0L985.0 601.0L985.6 617.5Z" fill="#c4c400"/>
<path d="M910.0 631.0L985.6 617.5L986.3 636.8Z" fill="#d2d200"/>
<path d="M910.0 631.0L986.3 636.8L987.0 656.0Z" fill="#a8a800"/>
<ellipse cx="952.5" cy="664.0" rx="8.2" ry="19.5" transform="rotate(13.3 952.5 664.0)" fill="#9c9c00"/>
<path d="M899.0 636.0L957.0 645.0L948.0 683.0Z" fill="#d2d200"/>
<path d="M899.0 636.0L957.0 645.0L954.3 656.4Z" fill="#c4c400"/>
<path d="M899.0 636.0L954.3 656.4L951.2 669.7Z" fill="#d2d200"/>
<path d="M899.0 636.0L951.2 669.7L948.0 683.0Z" fill="#a8a800"/>
<linearGradient id="ag11" gradientUnits="userSpaceOnUse" x1="1097.0" y1="689.0" x2="1090.0" y2="713.0"><stop offset="0" stop-color="#c6c600"/><stop offset=".18" stop-color="#d8d800"/><stop offset=".5" stop-color="#c8c800"/><stop offset=".8" stop-color="#acac00"/><stop offset="1" stop-color="#969600"/></linearGradient>
<path d="M960.0 650.0L1097.0 689.0L1090.0 713.0L956.0 672.0Z" fill="url(#ag11)"/>
<ellipse cx="1093.5" cy="701.0" rx="5.2" ry="12.5" transform="rotate(16.3 1093.5 701.0)" fill="#b0b000"/>
<ellipse cx="964.5" cy="728.0" rx="8.5" ry="20.3" transform="rotate(9.9 964.5 728.0)" fill="#9c9c00"/>
<path d="M908.0 698.0L968.0 708.0L961.0 748.0Z" fill="#d2d200"/>
<path d="M908.0 698.0L968.0 708.0L965.9 720.0Z" fill="#c4c400"/>
<path d="M908.0 698.0L965.9 720.0L963.4 734.0Z" fill="#d2d200"/>
<path d="M908.0 698.0L963.4 734.0L961.0 748.0Z" fill="#a8a800"/>
<linearGradient id="ag12" gradientUnits="userSpaceOnUse" x1="1109.0" y1="751.0" x2="1102.0" y2="775.0"><stop offset="0" stop-color="#c6c600"/><stop offset=".18" stop-color="#d8d800"/><stop offset=".5" stop-color="#c8c800"/><stop offset=".8" stop-color="#acac00"/><stop offset="1" stop-color="#969600"/></linearGradient>
<path d="M968.0 710.0L1109.0 751.0L1102.0 775.0L965.0 732.0Z" fill="url(#ag12)"/>
<ellipse cx="1105.5" cy="763.0" rx="5.2" ry="12.5" transform="rotate(16.3 1105.5 763.0)" fill="#b0b000"/>
</g>
<rect x="275" y="258" width="20" height="440" fill="url(#leg)" stroke="#1c1c1c" stroke-width="1.6"/>
<line x1="275" x2="295" y1="346" y2="346" stroke="#1c1c1c" stroke-width="1.4"/>
<line x1="275" x2="295" y1="434" y2="434" stroke="#1c1c1c" stroke-width="1.4"/>
<line x1="275" x2="295" y1="522" y2="522" stroke="#1c1c1c" stroke-width="1.4"/>
<line x1="275" x2="295" y1="609.7" y2="609.7" stroke="#1c1c1c" stroke-width="1.4"/>
<g stroke-width="1.4" fill="none"><path d="M307.5 961L305 946" stroke="#10b010"/><path d="M307.5 961L318 950" stroke="#d01010"/><path d="M307.5 961L324 966.5" stroke="#1010d0"/></g><path d="M304 937.5l6 10q-5.5 3.5-11.5-.5z" fill="#128a12"/><path d="M324.5 944l-2.5 10.5q-6.5 .5-8.5-5.5q4-5 11-5z" fill="#a80c0c"/><path d="M332.5 969.5l-10.5 4.5q-3.5-4.5-.5-10z" fill="#0c0cb0"/>
<ellipse cx="1858" cy="262" rx="34" ry="10" fill="#1c1c1c" opacity=".55" filter="url(#bl6)"/><path d="M1846.7 187.2L1887.8 196.7L1861.7 224.4L1817.8 212.2Z" fill="#8e8e8e"/><path d="M1817.8 212.2L1861.7 224.4L1865 264.4L1826.1 246.7Z" fill="#888888"/><path d="M1861.7 224.4L1887.8 196.7L1888.9 235.6L1865 264.4Z" fill="#8b8b8b"/><path d="M1817.8 212.2L1861.7 224.4L1887.8 196.7M1861.7 224.4L1865 264.4" fill="none" stroke="#9c9c9c" stroke-width="1" stroke-dasharray="6 2"/><path d="M1856 218l7.5 2l4-4.5l-7-2zM1853.5 221l8.2 3.4l.5 8-8.2-3.5zM1861.7 224.4l5.300-5.8l.5 8.4-5.300 5.8z" fill="#949aa6" opacity=".6"/>
<rect x="1883.5" y="284.5" width="32.5" height="195.5" rx="4" fill="#8a8a8a" stroke="#4e4e4e" stroke-width="1.2"/><rect x="1884.5" y="285.5" width="30.5" height="193.5" rx="3.5" fill="none" stroke="#9a9a9a" stroke-width=".8"/><circle cx="1908.5" cy="290.5" r="3.6" fill="#5e5e5e"/><path d="M1906.8 288.8l3.4 3.4M1910.2 288.8l-3.4 3.4" stroke="#d8d8d8" stroke-width="1"/><path d="M1890 316a10 10 0 0 1 10-10h10v10a10 10 0 0 1-20 0z" fill="#b4b4b4" stroke="#6a6a6a" stroke-width="1"/><circle cx="1900" cy="316" r="5" fill="#9a9a9a" stroke="#6e6e6e"/><path d="M1891 319a9 9 0 0 0 18 0" fill="none" stroke="#dcdcdc" stroke-width="2"/><path d="M1897 336.5h6l-3 3.5z" fill="#666"/><path d="M1886.5 344.5h27" stroke="#6c6c6c"/><path d="M1886.5 345.5h27" stroke="#a0a0a0"/><path d="M1894 358l-2-3.5q1.5-1.5 3 .5l1 1.5v-6q1.2-1.2 2.2 0v-1.5q1.2-1.2 2.4 0v1.2q1.2-1 2.3.2v1.6q1.2-.8 2.1.4v6q0 5-3 7.5h-6q-2-2-4-7z" fill="#d6d6d6" stroke="#5a5a5a" stroke-width=".9"/><circle cx="1898.5" cy="380.5" r="6" fill="#c4c4c4" stroke="#5a5a5a" stroke-width="1.3"/><rect x="1895.5" y="377" width="5" height="6.5" fill="#e8e8e8" stroke="#666" stroke-width=".7"/><path d="M1903 385l5 5" stroke="#5a5a5a" stroke-width="2.4"/><path d="M1897 398.5h6l-3 3.5z" fill="#666"/><g fill="none" stroke="#a4a4a4" stroke-width="1.1"><ellipse cx="1900" cy="416" rx="4.5" ry="8"/><path d="M1892 413q-2 6 4 8M1908 413q2 6-4 8"/><path d="M1900 412v5M1897.5 414.5h5"/></g><path d="M1897 432.5h6l-3 3.5z" fill="#666"/><rect x="1892.5" y="447.5" width="15" height="10.5" fill="#b8b8b8" stroke="#e8e8e8" stroke-width="1.3"/><rect x="1895.5" y="450.5" width="9" height="4.5" fill="#8a8a8a" stroke="#e8e8e8" stroke-width="1"/><path d="M1894 446l3-3M1899 445.5l4-2.5" stroke="#dcdcdc" stroke-width="1"/><circle cx="1908.5" cy="473" r="3.6" fill="#5e5e5e"/><path d="M1906.5 472h4M1907 474h3l-1.5 1.5z" stroke="#d8d8d8" stroke-width=".8" fill="#d8d8d8"/></svg>
<span class="t" style="left:275.00px;top:181.55px;font-size:14.6px;color:#161616;letter-spacing:0.066px;-webkit-text-stroke:0.35px #161616;">Type: Von Mises Stress</span>
<span class="t" style="left:275.00px;top:201.55px;font-size:14.6px;color:#161616;letter-spacing:-0.177px;-webkit-text-stroke:0.35px #161616;">Unit: MPa</span>
<span class="t" style="left:276.00px;top:221.55px;font-size:14.6px;color:#161616;letter-spacing:0.215px;-webkit-text-stroke:0.35px #161616;">11/03/2014, 8:12:13 PM</span>
<span class="t" style="left:306.00px;top:244.55px;font-size:14.6px;color:#161616;letter-spacing:-0.019px;-webkit-text-stroke:0.35px #161616;">153.8 Max</span>
<span class="t" style="left:306.00px;top:332.55px;font-size:14.6px;color:#161616;letter-spacing:-0.787px;-webkit-text-stroke:0.35px #161616;">123</span>
<span class="t" style="left:306.00px;top:420.55px;font-size:14.6px;color:#161616;letter-spacing:-0.104px;-webkit-text-stroke:0.35px #161616;">92.3</span>
<span class="t" style="left:306.00px;top:508.55px;font-size:14.6px;color:#161616;letter-spacing:-0.104px;-webkit-text-stroke:0.35px #161616;">61.5</span>
<span class="t" style="left:306.00px;top:596.55px;font-size:14.6px;color:#161616;letter-spacing:-0.104px;-webkit-text-stroke:0.35px #161616;">30.8</span>
<span class="t" style="left:306.00px;top:684.55px;font-size:14.6px;color:#161616;letter-spacing:-0.140px;-webkit-text-stroke:0.35px #161616;">0 Min</span>
<span class="t" style="left:299.00px;top:928.33px;font-size:10.5px;color:#20d820;font-weight:bold;">Y</span>
<span class="t" style="left:324.00px;top:936.33px;font-size:10.5px;color:#f02020;font-weight:bold;">X</span>
<span class="t" style="left:334.00px;top:966.33px;font-size:10.5px;color:#2020f0;font-weight:bold;">Z</span>
<div class="b" style="left:1918px;top:137px;width:2px;height:877px;background:#cfcfcf;"></div>
<span class="t" style="left:1845.34px;top:199.17px;font-size:8.5px;color:#596070;font-weight:bold;transform:rotate(-52deg) skewX(-12deg);transform-origin:50% 60%;">TOP</span>
<span class="t" style="left:1831.88px;top:232.17px;font-size:8.5px;color:#596070;font-weight:bold;transform:rotate(17deg) skewX(8deg);transform-origin:50% 60%;">LEFT</span>
<span class="t" style="left:1864.00px;top:225.67px;font-size:8.5px;color:#596070;letter-spacing:-0.655px;font-weight:bold;transform:rotate(-50deg) skewX(-6deg);transform-origin:50% 60%;">FRONT</span>
<svg class="b" style="left:1860px;top:142px" width="60" height="16" viewBox="1860 142 60 16"><g stroke="#fff" fill="none" stroke-width="2"><path d="M1866 152.5h9"/><rect x="1885.5" y="147.5" width="6" height="6" stroke-width="1.5"/><path d="M1887.5 147v-2h6.5v6.5h-2" stroke-width="1.5"/><path d="M1906 146l8 8M1914 146l-8 8"/></g></svg>
<div class="b" style="left:0px;top:137px;width:254px;height:877px;background:#f0f0f0;"></div>
<div class="b" style="left:252px;top:137px;width:2px;height:877px;background:#9a9a9a;"></div>
<div class="b" style="left:250px;top:137px;width:2px;height:877px;background:#f4f4f4;"></div>
<div class="b" style="left:4px;top:143px;width:232px;height:1px;background:#ffffff;"></div>
<div class="b" style="left:4px;top:147px;width:232px;height:1px;background:#a0a0a0;"></div>
<div class="b" style="left:235px;top:143px;width:1px;height:5px;background:#a0a0a0;"></div>
<div class="b" style="left:4px;top:143px;width:1px;height:5px;background:#fff;"></div>
<svg class="b" style="left:240px;top:142px" width="8" height="7" viewBox="0 0 8 7"><path d="M1 0.8l6 5.4M7 0.8l-6 5.4" stroke="#000" stroke-width="1.7" fill="none"/></svg>
<div class="b" style="left:3px;top:153px;width:247px;height:20px;background:#ababab;"></div>
<span class="t" style="left:11.00px;top:155.53px;font-size:13px;color:#fff;letter-spacing:-0.357px;font-weight:bold;">Stress Analysis</span>
<svg class="b" style="left:105px;top:160px" width="10" height="6" viewBox="0 0 10 6"><path d="M1 0.5h8l-4 4.5z" fill="#fff"/></svg>
<svg class="b" style="left:232px;top:154px" width="16" height="17" viewBox="0 0 16 17"><path d="M1.5 1.5h12.5v11h-2.5l1 3-4-3h-7z" fill="#ffffcc" stroke="#000" stroke-width="1.2"/><text x="8" y="11" font-family="Liberation Sans,sans-serif" font-weight="bold" font-size="11" fill="#0000a0" text-anchor="middle">?</text></svg>
<div class="b" style="left:3px;top:173px;width:247px;height:838px;background:#ffffff;border:1px solid #646464;box-sizing:border-box;"></div>
<div class="b" style="left:4px;top:174px;width:245px;height:18px;background:#ababab;"></div>
<svg class="b" style="left:0;top:137px" width="254" height="877" viewBox="0 137 254 877"><g stroke="#9c9c9c" stroke-width="1" fill="none" shape-rendering="crispEdges">
<path d="M12.5 191V200.5H26"/>
<path d="M31.5 209V507"/>
<path d="M31.5 218.5H45"/>
<path d="M31.5 380.5H45"/>
<path d="M31.5 398.5H45"/>
<path d="M31.5 416.5H45"/>
<path d="M31.5 470.5H45"/>
<path d="M31.5 488.5H45"/>
<path d="M31.5 506.5H45"/>
<path d="M50.5 227V363"/>
<path d="M50.5 236.5H64"/>
<path d="M50.5 254.5H64"/>
<path d="M50.5 272.5H64"/>
<path d="M50.5 290.5H64"/>
<path d="M50.5 308.5H64"/>
<path d="M50.5 326.5H64"/>
<path d="M50.5 344.5H64"/>
<path d="M50.5 362.5H64"/>
<path d="M50.5 425V453"/>
<path d="M50.5 434.5H64"/>
<path d="M50.5 452.5H64"/>
<path d="M50.5 515V669"/>
<path d="M50.5 524.5H62"/>
<path d="M50.5 542.5H62"/>
<path d="M50.5 560.5H62"/>
<path d="M50.5 578.5H62"/>
<path d="M50.5 596.5H62"/>
<path d="M50.5 614.5H62"/>
<path d="M50.5 632.5H62"/>
<path d="M50.5 650.5H62"/>
<path d="M50.5 668.5H62"/>
</g>
<defs><linearGradient id="rb" x1="0" y1="0" x2="0" y2="1"><stop offset="0" stop-color="#f00"/><stop offset="0.3" stop-color="#ff0"/><stop offset="0.55" stop-color="#0c0"/><stop offset="0.8" stop-color="#0cf"/><stop offset="1" stop-color="#00f"/></linearGradient></defs><path d="M15.5 184.5h6l3-3h-6z" fill="#fff2b0" stroke="#b04a00" stroke-width="1.1" stroke-linejoin="round"/><path d="M21.5 184.5l3-3v6l-3 3z" fill="#e8a818" stroke="#b04a00" stroke-width="1.1" stroke-linejoin="round"/><rect x="9.5" y="184.5" width="6" height="6" fill="#ffd83a" stroke="#b04a00" stroke-width="1.1"/><rect x="15.5" y="184.5" width="6" height="6" fill="#ffd83a" stroke="#b04a00" stroke-width="1.1"/><path d="M9.5 178.5l3-3h6l-3 3z" fill="#e8f2ff" stroke="#000" stroke-width="1.2" stroke-linejoin="round"/><path d="M15.5 178.5l3-3v6l-3 3z" fill="#3a78c8" stroke="#000" stroke-width="1.2" stroke-linejoin="round"/><rect x="9.5" y="178.5" width="6" height="6" fill="#a8c8f0" stroke="#000" stroke-width="1.2"/><path d="M10.5 179.5h3.5v3z" fill="#fff" opacity=".8"/>
<rect x="8.0" y="196" width="9" height="9" fill="#8a8a8a"/><rect x="9.0" y="197" width="7" height="7" fill="#fff"/>
<rect x="10.0" y="200" width="5" height="1" fill="#000"/>
<defs><radialGradient id="simg" cx="0.72" cy="0.72" r="0.8"><stop offset="0" stop-color="#f00"/><stop offset="0.18" stop-color="#f00"/><stop offset="0.32" stop-color="#ff0"/><stop offset="0.5" stop-color="#0d0"/><stop offset="0.66" stop-color="#0ef"/><stop offset="0.85" stop-color="#00f"/></radialGradient></defs><path d="M28.5 203h9.5v-9.5h5.5v15.5h-15z" fill="url(#simg)" stroke="#000" stroke-width="1.2"/><path d="M28.5 194.5l7 6.5" stroke="#000" stroke-width="1.5" fill="none"/><path d="M37.0 202.5l-5.5-1.2l4.2-4.2z" fill="#000"/>
<rect x="27.0" y="214" width="9" height="9" fill="#8a8a8a"/><rect x="28.0" y="215" width="7" height="7" fill="#fff"/>
<rect x="29.0" y="218" width="5" height="1" fill="#000"/>
<path d="M53.0 220.5h6l3-3h-6z" fill="#fff2b0" stroke="#b04a00" stroke-width="1.1" stroke-linejoin="round"/><path d="M59.0 220.5l3-3v6l-3 3z" fill="#e8a818" stroke="#b04a00" stroke-width="1.1" stroke-linejoin="round"/><rect x="47.0" y="220.5" width="6" height="6" fill="#ffd83a" stroke="#b04a00" stroke-width="1.1"/><rect x="53.0" y="220.5" width="6" height="6" fill="#ffd83a" stroke="#b04a00" stroke-width="1.1"/><path d="M47.0 214.5l3-3h6l-3 3z" fill="#e8f2ff" stroke="#000" stroke-width="1.2" stroke-linejoin="round"/><path d="M53.0 214.5l3-3v6l-3 3z" fill="#3a78c8" stroke="#000" stroke-width="1.2" stroke-linejoin="round"/><rect x="47.0" y="214.5" width="6" height="6" fill="#a8c8f0" stroke="#000" stroke-width="1.2"/><path d="M48.0 215.5h3.5v3z" fill="#fff" opacity=".8"/>
<rect x="46.0" y="232" width="9" height="9" fill="#8a8a8a"/><rect x="47.0" y="233" width="7" height="7" fill="#fff"/>
<rect x="48.0" y="236" width="5" height="1" fill="#000"/>
<rect x="50.0" y="234" width="1" height="5" fill="#000"/>
<path d="M67 234.5l4-4h10v9.5l-4 4.5h-10z" fill="#e0e0e0" stroke="#4a4a4a" stroke-width="1.2" stroke-linejoin="round"/><path d="M67 234.5h10v10h-10z" fill="#c8c8c8" stroke="#4a4a4a" stroke-width="1.2"/><path d="M77 234.5l4-4" stroke="#4a4a4a" stroke-width="1.1"/>
<rect x="46.0" y="250" width="9" height="9" fill="#8a8a8a"/><rect x="47.0" y="251" width="7" height="7" fill="#fff"/>
<rect x="48.0" y="254" width="5" height="1" fill="#000"/>
<rect x="50.0" y="252" width="1" height="5" fill="#000"/>
<path d="M67 252.5l4-4h10v9.5l-4 4.5h-10z" fill="#fff0a0" stroke="#b44a00" stroke-width="1.2" stroke-linejoin="round"/><path d="M67 252.5h10v10h-10z" fill="#ffdc3c" stroke="#b44a00" stroke-width="1.2"/><path d="M77 252.5l4-4" stroke="#b44a00" stroke-width="1.1"/>
<rect x="46.0" y="268" width="9" height="9" fill="#8a8a8a"/><rect x="47.0" y="269" width="7" height="7" fill="#fff"/>
<rect x="48.0" y="272" width="5" height="1" fill="#000"/>
<rect x="50.0" y="270" width="1" height="5" fill="#000"/>
<path d="M67 270.5l4-4h10v9.5l-4 4.5h-10z" fill="#fff0a0" stroke="#b44a00" stroke-width="1.2" stroke-linejoin="round"/><path d="M67 270.5h10v10h-10z" fill="#ffdc3c" stroke="#b44a00" stroke-width="1.2"/><path d="M77 270.5l4-4" stroke="#b44a00" stroke-width="1.1"/>
<rect x="46.0" y="286" width="9" height="9" fill="#8a8a8a"/><rect x="47.0" y="287" width="7" height="7" fill="#fff"/>
<rect x="48.0" y="290" width="5" height="1" fill="#000"/>
<rect x="50.0" y="288" width="1" height="5" fill="#000"/>
<path d="M67 288.5l4-4h10v9.5l-4 4.5h-10z" fill="#fff0a0" stroke="#b44a00" stroke-width="1.2" stroke-linejoin="round"/><path d="M67 288.5h10v10h-10z" fill="#ffdc3c" stroke="#b44a00" stroke-width="1.2"/><path d="M77 288.5l4-4" stroke="#b44a00" stroke-width="1.1"/>
<rect x="46.0" y="304" width="9" height="9" fill="#8a8a8a"/><rect x="47.0" y="305" width="7" height="7" fill="#fff"/>
<rect x="48.0" y="308" width="5" height="1" fill="#000"/>
<rect x="50.0" y="306" width="1" height="5" fill="#000"/>
<path d="M67 306.5l4-4h10v9.5l-4 4.5h-10z" fill="#fff0a0" stroke="#b44a00" stroke-width="1.2" stroke-linejoin="round"/><path d="M67 306.5h10v10h-10z" fill="#ffdc3c" stroke="#b44a00" stroke-width="1.2"/><path d="M77 306.5l4-4" stroke="#b44a00" stroke-width="1.1"/>
<rect x="46.0" y="322" width="9" height="9" fill="#8a8a8a"/><rect x="47.0" y="323" width="7" height="7" fill="#fff"/>
<rect x="48.0" y="326" width="5" height="1" fill="#000"/>
<rect x="50.0" y="324" width="1" height="5" fill="#000"/>
<path d="M67 324.5l4-4h10v9.5l-4 4.5h-10z" fill="#fff0a0" stroke="#b44a00" stroke-width="1.2" stroke-linejoin="round"/><path d="M67 324.5h10v10h-10z" fill="#ffdc3c" stroke="#b44a00" stroke-width="1.2"/><path d="M77 324.5l4-4" stroke="#b44a00" stroke-width="1.1"/>
<rect x="46.0" y="340" width="9" height="9" fill="#8a8a8a"/><rect x="47.0" y="341" width="7" height="7" fill="#fff"/>
<rect x="48.0" y="344" width="5" height="1" fill="#000"/>
<rect x="50.0" y="342" width="1" height="5" fill="#000"/>
<path d="M67 342.5l4-4h10v9.5l-4 4.5h-10z" fill="#fff0a0" stroke="#b44a00" stroke-width="1.2" stroke-linejoin="round"/><path d="M67 342.5h10v10h-10z" fill="#ffdc3c" stroke="#b44a00" stroke-width="1.2"/><path d="M77 342.5l4-4" stroke="#b44a00" stroke-width="1.1"/>
<rect x="46.0" y="358" width="9" height="9" fill="#8a8a8a"/><rect x="47.0" y="359" width="7" height="7" fill="#fff"/>
<rect x="48.0" y="362" width="5" height="1" fill="#000"/>
<rect x="50.0" y="360" width="1" height="5" fill="#000"/>
<path d="M66.5 370v-11.5l1.5-1.8h5l1.5 1.8h7v11.5z" fill="#f5d9a4" stroke="#c8a060" stroke-width="1"/>
<rect x="27.0" y="376" width="9" height="9" fill="#8a8a8a"/><rect x="28.0" y="377" width="7" height="7" fill="#fff"/>
<rect x="29.0" y="380" width="5" height="1" fill="#000"/>
<rect x="31.0" y="378" width="1" height="5" fill="#000"/>
<ellipse cx="54.5" cy="381" rx="7.5" ry="3.2" fill="none" stroke="#333" transform="rotate(25 54.5 381)"/><ellipse cx="54.5" cy="381" rx="7.5" ry="3.2" fill="none" stroke="#333" transform="rotate(-50 54.5 381)"/><circle cx="54.5" cy="381" r="2.2" fill="#fff" stroke="#333"/><circle cx="49.5" cy="376" r="1.5" fill="#e00"/><circle cx="48.5" cy="383" r="1.5" fill="#e00"/>
<rect x="27.0" y="394" width="9" height="9" fill="#8a8a8a"/><rect x="28.0" y="395" width="7" height="7" fill="#fff"/>
<rect x="29.0" y="398" width="5" height="1" fill="#000"/>
<rect x="31.0" y="396" width="1" height="5" fill="#000"/>
<path d="M49.5 397.5l3-4.5h7l3 4v5h-9z" fill="#6e6e00" stroke="#000" stroke-width="1.1" stroke-linejoin="round"/><path d="M49.5 397.5l3-4.5h7l-2.5 4.5z" fill="#e4e428" stroke="#000" stroke-width=".9" stroke-linejoin="round"/><path d="M52.0 396h6.5M54.0 394l-2 3M56.5 394l-2 3" stroke="#30a030" stroke-width=".6"/><path d="M49.0 398l4.5 4.5h9" stroke="#20d8e8" stroke-width="1" fill="none"/><path d="M48.5 403l2.5-3M51.5 405.5l3-3.5M55.0 406l3-3.5M58.5 406l3-3.5M61.5 405.5l1.5-2" stroke="#f00000" stroke-width="1.4"/>
<rect x="27.0" y="412" width="9" height="9" fill="#8a8a8a"/><rect x="28.0" y="413" width="7" height="7" fill="#fff"/>
<rect x="29.0" y="416" width="5" height="1" fill="#000"/>
<path d="M49.5 419l3.5-3h5l3.5 3.5v2.5l-2.5 2h-4.5l-5-2.5z" fill="#6e6e00" stroke="#000" stroke-width="1.1" stroke-linejoin="round"/><path d="M49.5 419l3.5-3h5l1 1l-4 3.5z" fill="#f0f040" stroke="#20d8e8" stroke-width=".9" stroke-linejoin="round"/><path d="M51.5 410.5l3 4.5" stroke="#1030f0" stroke-width="2"/><path d="M56.5 418l-5-1.5l4-3z" fill="#1030f0"/>
<rect x="66" y="433.5" width="16" height="3" fill="#7f9fc0"/><path d="M66 433.5h16M66 436.5h16" stroke="#101018" stroke-width=".9"/><path d="M69.5 428v14" stroke="#000" stroke-width="1.3"/><path d="M67.5 431l2 2.5l2-2.5zM67.5 439l2-2.5l2 2.5z" fill="#000"/><path d="M78.5 428v14" stroke="#f00000" stroke-width="1.3"/><path d="M76.5 431l2 2.5l2-2.5zM76.5 439l2-2.5l2 2.5z" fill="#f00000"/>
<rect x="66" y="451.5" width="16" height="3" fill="#7f9fc0"/><path d="M66 451.5h16M66 454.5h16" stroke="#101018" stroke-width=".9"/><path d="M69.5 446v14" stroke="#000" stroke-width="1.3"/><path d="M67.5 449l2 2.5l2-2.5zM67.5 457l2-2.5l2 2.5z" fill="#000"/><path d="M78.5 446v14" stroke="#f00000" stroke-width="1.3"/><path d="M76.5 449l2 2.5l2-2.5zM76.5 457l2-2.5l2 2.5z" fill="#f00000"/>
<rect x="27.0" y="466" width="9" height="9" fill="#8a8a8a"/><rect x="28.0" y="467" width="7" height="7" fill="#fff"/>
<rect x="29.0" y="470" width="5" height="1" fill="#000"/>
<rect x="31.0" y="468" width="1" height="5" fill="#000"/>
<rect x="48.5" y="471" width="9.5" height="5.5" fill="#ababab"/><rect x="52.0" y="465.3" width="10.5" height="5.5" fill="#f00000"/>
<path d="M47.5 482.5h6.5v8h8.5v6h-15z" fill="#58a8c4" stroke="#103880" stroke-width="1.1"/><path d="M47.5 488l6.5 3l-6.5 5M54.0 482.5l-6.5 5.5M54.0 490.5l3 6l2.5-6l3.5 6M50.5 482.5l3.5 8" stroke="#204888" stroke-width=".6" fill="none"/>
<rect x="27.0" y="502" width="9" height="9" fill="#8a8a8a"/><rect x="28.0" y="503" width="7" height="7" fill="#fff"/>
<rect x="29.0" y="506" width="5" height="1" fill="#000"/>
<rect x="51.5" y="499" width="7" height="16" fill="url(#rb)"/>
<rect x="64.5" y="517.5" width="15" height="15" fill="#fff" stroke="#1c1c1c" stroke-width="1"/><path d="M67.5 525l3.5 4.5l6.5-10" stroke="#2a6ad0" stroke-width="2" fill="none"/><rect x="85.5" y="517" width="8" height="16" fill="url(#rb)"/>
<rect x="69" y="535" width="8" height="16" fill="url(#rb)"/>
<rect x="69" y="553" width="8" height="16" fill="url(#rb)"/>
<rect x="69" y="571" width="8" height="16" fill="url(#rb)"/>
<rect x="69" y="589" width="8" height="16" fill="url(#rb)"/>
<rect x="46.0" y="610" width="9" height="9" fill="#8a8a8a"/><rect x="47.0" y="611" width="7" height="7" fill="#fff"/>
<rect x="48.0" y="614" width="5" height="1" fill="#000"/>
<rect x="50.0" y="612" width="1" height="5" fill="#000"/>
<path d="M66.5 622v-11.5l1.5-1.8h5l1.5 1.8h7v11.5z" fill="#f5d9a4" stroke="#b08040" stroke-width="1"/><rect x="72" y="612.5" width="4.5" height="9.5" fill="url(#rb)"/>
<rect x="46.0" y="628" width="9" height="9" fill="#8a8a8a"/><rect x="47.0" y="629" width="7" height="7" fill="#fff"/>
<rect x="48.0" y="632" width="5" height="1" fill="#000"/>
<rect x="50.0" y="630" width="1" height="5" fill="#000"/>
<path d="M66.5 640v-11.5l1.5-1.8h5l1.5 1.8h7v11.5z" fill="#f5d9a4" stroke="#b08040" stroke-width="1"/><rect x="72" y="630.5" width="4.5" height="9.5" fill="url(#rb)"/>
<rect x="46.0" y="646" width="9" height="9" fill="#8a8a8a"/><rect x="47.0" y="647" width="7" height="7" fill="#fff"/>
<rect x="48.0" y="650" width="5" height="1" fill="#000"/>
<rect x="50.0" y="648" width="1" height="5" fill="#000"/>
<path d="M66.5 658v-11.5l1.5-1.8h5l1.5 1.8h7v11.5z" fill="#f5d9a4" stroke="#b08040" stroke-width="1"/><rect x="72" y="648.5" width="4.5" height="9.5" fill="url(#rb)"/>
<rect x="46.0" y="664" width="9" height="9" fill="#8a8a8a"/><rect x="47.0" y="665" width="7" height="7" fill="#fff"/>
<rect x="48.0" y="668" width="5" height="1" fill="#000"/>
<rect x="50.0" y="666" width="1" height="5" fill="#000"/>
<path d="M66.5 676v-11.5l1.5-1.8h5l1.5 1.8h7v11.5z" fill="#f5d9a4" stroke="#b08040" stroke-width="1"/><rect x="72" y="666.5" width="4.5" height="9.5" fill="url(#rb)"/></svg>
<span class="t" style="left:28.00px;top:177.37px;font-size:11px;color:#000;letter-spacing:-0.366px;">Assembly2</span>
<span class="t" style="left:46.50px;top:195.37px;font-size:11px;color:#000;letter-spacing:-0.211px;">Simulation:1</span>
<span class="t" style="left:65.50px;top:213.37px;font-size:11px;color:#000;letter-spacing:-0.311px;">Assembly2</span>
<span class="t" style="left:84.50px;top:231.37px;font-size:11px;color:#000;letter-spacing:-0.157px;">Chamber:1</span>
<span class="t" style="left:84.50px;top:249.37px;font-size:11px;color:#000;letter-spacing:-0.220px;">End Cap:1</span>
<span class="t" style="left:84.50px;top:267.37px;font-size:11px;color:#000;letter-spacing:-0.090px;">JIS B 1176 - Metric M12 x 35:1</span>
<span class="t" style="left:84.50px;top:285.37px;font-size:11px;color:#000;letter-spacing:-0.090px;">JIS B 1176 - Metric M12 x 35:2</span>
<span class="t" style="left:84.50px;top:303.37px;font-size:11px;color:#000;letter-spacing:-0.090px;">JIS B 1176 - Metric M12 x 35:3</span>
<span class="t" style="left:84.50px;top:321.37px;font-size:11px;color:#000;letter-spacing:-0.166px;">Poppet Pin:1</span>
<span class="t" style="left:84.50px;top:339.37px;font-size:11px;color:#000;letter-spacing:-0.166px;">Poppet Pin:2</span>
<span class="t" style="left:84.50px;top:357.37px;font-size:11px;color:#000;letter-spacing:-0.234px;">Relationships</span>
<span class="t" style="left:65.50px;top:375.37px;font-size:11px;color:#000;letter-spacing:-0.140px;">Material</span>
<span class="t" style="left:65.50px;top:393.37px;font-size:11px;color:#000;letter-spacing:-0.058px;">Constraints</span>
<span class="t" style="left:65.50px;top:411.37px;font-size:11px;color:#000;letter-spacing:-0.394px;">Loads</span>
<span class="t" style="left:84.50px;top:429.37px;font-size:11px;color:#000;letter-spacing:-0.069px;">Pressure:1</span>
<span class="t" style="left:84.50px;top:447.37px;font-size:11px;color:#000;letter-spacing:-0.069px;">Pressure:2</span>
<span class="t" style="left:65.50px;top:465.37px;font-size:11px;color:#000;letter-spacing:-0.051px;">Contacts</span>
<span class="t" style="left:65.50px;top:483.37px;font-size:11px;color:#000;letter-spacing:-0.475px;">Mesh</span>
<span class="t" style="left:65.50px;top:501.37px;font-size:11px;color:#000;letter-spacing:-0.240px;">Results</span>
<span class="t" style="left:100.00px;top:519.37px;font-size:11px;color:#000;letter-spacing:-0.311px;">Von Mises Stress</span>
<span class="t" style="left:84.50px;top:537.37px;font-size:11px;color:#000;letter-spacing:-0.257px;">1st Principal Stress</span>
<span class="t" style="left:84.50px;top:555.37px;font-size:11px;color:#000;letter-spacing:-0.268px;">3rd Principal Stress</span>
<span class="t" style="left:84.50px;top:573.37px;font-size:11px;color:#000;letter-spacing:-0.303px;">Displacement</span>
<span class="t" style="left:84.50px;top:591.37px;font-size:11px;color:#000;letter-spacing:0.007px;">Safety Factor</span>
<span class="t" style="left:84.50px;top:609.37px;font-size:11px;color:#000;letter-spacing:-0.196px;">Stress</span>
<span class="t" style="left:84.50px;top:627.37px;font-size:11px;color:#000;letter-spacing:-0.303px;">Displacement</span>
<span class="t" style="left:84.50px;top:645.37px;font-size:11px;color:#000;letter-spacing:-0.123px;">Strain</span>
<span class="t" style="left:84.50px;top:663.37px;font-size:11px;color:#000;letter-spacing:-0.124px;">Contact Pressure</span>
<div class="b" style="left:0px;top:0px;width:1920px;height:23px;background:linear-gradient(#050505 0,#1c1c1c 12%,#3a3c40 45%,#54575c 80%,#5c5f64 100%);"></div>
<div class="b" style="left:620px;top:6px;width:200px;height:14px;background:radial-gradient(ellipse at center,rgba(20,20,20,.55),rgba(20,20,20,0) 70%);"></div>
<div class="b" style="left:1120px;top:4px;width:190px;height:16px;background:radial-gradient(ellipse at center,rgba(20,20,20,.45),rgba(20,20,20,0) 70%);"></div>
<div class="b" style="left:616px;top:1px;width:40px;height:21px;background:linear-gradient(90deg,rgba(30,60,36,.5),rgba(30,56,36,0));"></div>
<div class="b" style="left:0px;top:23px;width:1920px;height:19px;background:#3b3b3b;"></div>
<div class="b" style="left:0px;top:22px;width:1920px;height:1px;background:#6e6e6e;"></div>
<div class="b" style="left:0px;top:41.5px;width:1920px;height:1.5px;background:#62c234;"></div>
<div class="b" style="left:42px;top:0px;width:574px;height:23px;background:linear-gradient(#8c8c8c 0,#7a7a7a 15%,#6c6c6c 50%,#5e5e5e 85%,#4e4e4e 100%);border-radius:0 0 4px 0;box-shadow:inset 0 1px 0 #aaa;"></div>
<div class="b" style="left:181px;top:2px;width:1px;height:19px;background:#4a4a4a;"></div>
<div class="b" style="left:182px;top:2px;width:1px;height:19px;background:#8a8a8a;"></div>
<div class="b" style="left:0px;top:0px;width:41px;height:41px;background:linear-gradient(#7a7a7a,#5a5a5a 50%,#4a4a4a 51%,#6a6a6a);border:1px solid #1e1e1e;box-sizing:border-box;border-radius:2px;box-shadow:inset 0 0 0 1px #9a9a9a;"></div>
<svg class="b" style="left:0;top:0" width="42" height="42" viewBox="0 0 42 42"><defs><linearGradient id="og" x1="0" y1="0" x2="1" y2="1"><stop offset="0" stop-color="#f08228"/><stop offset="1" stop-color="#b4460a"/></linearGradient></defs><path d="M9 4h16v6h-4.5v13h4.5v6h-16v-6h4.5v-13h-4.5z" fill="url(#og)"/><path d="M9 4h16l-3 3h-10z" fill="#f8a050"/><path d="M13.5 10h7l-2 3v8l2 2h-7z" fill="#d05a10"/><path d="M31 18h7l-3.5 4z" fill="#111"/></svg>
<span class="t" style="left:12.00px;top:30.21px;font-size:9px;color:#111;letter-spacing:-1.168px;font-weight:bold;">PRO</span>
<svg class="b" style="left:0;top:0" width="620" height="23" viewBox="0 0 620 23"><path d="M51 6.5h9l4 3.5v8h-13z" fill="#fff" stroke="#555" stroke-width="1"/><path d="M72 11h5l-2.5 3z" fill="#333"/><path d="M87 17v-9h4l1.5 1.5h6v2" fill="#f4f4f4" stroke="#444"/><path d="M87 17l3-6h11.5l-3 6z" fill="#fafafa" stroke="#444"/><path d="M111.5 5.5h13v13h-13z" fill="#4a5a8a" stroke="#222"/><rect x="113.5" y="5.5" width="9" height="5" fill="#f0f0f0"/><rect x="114" y="13" width="8" height="5.5" fill="#fff"/><rect x="115" y="14.5" width="2.5" height="3" fill="#334"/><path d="M134 11l7-5v3q7 0 7 7.5h-3q0-4-4-4v3.5z" fill="#fff" stroke="#444" stroke-width=".8"/><path d="M174 11l-7-5v3q-7 0-7 7.5h3q0-4 4-4v3.5z" fill="#a8a8a8" stroke="#777" stroke-width=".8"/><path d="M190 7h11l3 3v7h-14z" fill="#999" stroke="#6a6a6a"/><path d="M193 14l5-5m0 3.5v-3.5h-3.5" stroke="#777" fill="none" stroke-width="1.5"/><path d="M212 11h4l-2 2.5z" fill="#444"/><path d="M226 6l2-2h4v5l-2 2h-4z" fill="#e8e8e8" stroke="#555" stroke-width=".8"/><rect x="225.5" y="12.5" width="5.5" height="5" fill="#2a9a2a" stroke="#0a5a0a"/><rect x="231" y="12.5" width="4" height="5" fill="#4aba4a" stroke="#0a5a0a" stroke-width=".6"/><path d="M235 9v9l2-2l1.5 3l1.5-.7l-1.5-3h3z" fill="#fff" stroke="#000" stroke-width=".8"/><path d="M246 11h4l-2 2.5z" fill="#444"/><circle cx="267.5" cy="12" r="7.5" fill="#c8c8c8" stroke="#444"/><path d="M263 8l3 2l-2 3zM268 6l3 3l-3 2zM270 13l3-1l-1 4zM264 15l3-2l1 4z" fill="#fff" opacity=".8"/><circle cx="391.5" cy="12" r="7.5" fill="#2050d0" stroke="#1a2a5a" stroke-width="1.3"/><path d="M391.5 12V4.5A7.5 7.5 0 0 1 398.5 9.5z" fill="#f0d020"/><path d="M391.5 12L398.5 9.5A7.5 7.5 0 0 1 396 18z" fill="#e03020"/><path d="M391.5 12L396 18A7.5 7.5 0 0 1 386 17.200z" fill="#a040c0"/><path d="M391.5 12L385 8.200A7.5 7.5 0 0 1 391.5 4.5z" fill="#30b040"/><circle cx="515" cy="10.5" r="6.5" fill="#5070e0" stroke="#16306a" stroke-width="1.3"/><path d="M515 10.5V4A6.5 6.5 0 0 1 521 8z" fill="#f0d020"/><path d="M515 10.5L521 8A6.5 6.5 0 0 1 518 16z" fill="#e04030"/><path d="M515 10.5L509.5 7A6.5 6.5 0 0 1 515 4z" fill="#40b040"/><circle cx="539" cy="10.5" r="6.5" fill="#5070e0" stroke="#16306a" stroke-width="1.3"/><path d="M539 10.5V4A6.5 6.5 0 0 1 545 8z" fill="#f0d020"/><path d="M539 10.5L545 8A6.5 6.5 0 0 1 542 16z" fill="#e04030"/><path d="M539 10.5L533.5 7A6.5 6.5 0 0 1 539 4z" fill="#40b040"/><path d="M516 14h7l-3.5 4zM515 19.5h9" fill="#40b0f0" stroke="#0060c0" stroke-width=".8"/><path d="M541 13l6 6M547 13l-6 6" stroke="#e01010" stroke-width="1.800"/><path d="M588 4.5v15M580.5 12h15" stroke="#5c5c5c" stroke-width="3.8"/><path d="M588 5.2v13.600M581.2 12h13.600" stroke="#969696" stroke-width="2.2"/><path d="M604 8.5h7M604 11h7l-3.5 4z" fill="#000" stroke="#000" stroke-width="1"/></svg>
<span class="t" style="left:559.50px;top:-0.16px;font-size:17px;color:#101010;font-style:italic;font-family:Liberation Serif,serif;">f</span>
<span class="t" style="left:566.00px;top:8.83px;font-size:10.5px;color:#101010;font-style:italic;font-family:Liberation Serif,serif;">x</span>
<div class="b" style="left:281px;top:2px;width:98px;height:19px;background:linear-gradient(#ececec,#dcdcdc 50%,#c8c8c8 51%,#d4d4d4);border:1px solid #7a7a7a;box-sizing:border-box;"></div>
<div class="b" style="left:405px;top:2px;width:98px;height:19px;background:linear-gradient(#ececec,#dcdcdc 50%,#c8c8c8 51%,#d4d4d4);border:1px solid #7a7a7a;box-sizing:border-box;"></div>
<span class="t" style="left:285.00px;top:4.53px;font-size:13px;color:#8a8a8a;letter-spacing:0.095px;font-style:italic;">Material</span>
<span class="t" style="left:409.00px;top:4.53px;font-size:13px;color:#8a8a8a;letter-spacing:-0.711px;font-style:italic;">Appearance</span>
<svg class="b" style="left:369px;top:9px" width="10" height="6" viewBox="0 0 10 6"><path d="M1 0.5h8l-4 4.5z" fill="#333"/></svg>
<svg class="b" style="left:493px;top:9px" width="10" height="6" viewBox="0 0 10 6"><path d="M1 0.5h8l-4 4.5z" fill="#333"/></svg>
<div class="b" style="left:780px;top:-4px;width:370px;height:30px;background:radial-gradient(ellipse at center,rgba(255,255,255,.38) 0%,rgba(255,255,255,.25) 45%,rgba(255,255,255,0) 72%);"></div>
<span class="t" style="left:809.50px;top:4.03px;font-size:13px;color:#000;letter-spacing:-0.639px;text-shadow:0 0 5px rgba(255,255,255,.9),0 0 9px rgba(255,255,255,.8),0 0 14px rgba(255,255,255,.7),0 0 3px rgba(255,255,255,.8);">Autodesk Inventor Professional 2014 Build: 170</span>
<span class="t" style="left:1066.00px;top:4.03px;font-size:13px;color:#000;letter-spacing:-0.787px;text-shadow:0 0 5px rgba(255,255,255,.9),0 0 9px rgba(255,255,255,.8),0 0 14px rgba(255,255,255,.7),0 0 3px rgba(255,255,255,.8);">Assembly2</span>
<span class="t" style="left:53.30px;top:26.49px;font-size:12.5px;color:#fff;letter-spacing:-0.485px;">Assemble</span>
<span class="t" style="left:124.00px;top:26.49px;font-size:12.5px;color:#fff;letter-spacing:-0.132px;">Simplify</span>
<span class="t" style="left:187.30px;top:26.49px;font-size:12.5px;color:#fff;letter-spacing:-0.585px;">Design</span>
<span class="t" style="left:242.70px;top:26.49px;font-size:12.5px;color:#fff;letter-spacing:-0.275px;">3D Model</span>
<span class="t" style="left:313.30px;top:26.49px;font-size:12.5px;color:#fff;letter-spacing:-0.229px;">Inspect</span>
<span class="t" style="left:372.30px;top:26.49px;font-size:12.5px;color:#fff;letter-spacing:-0.096px;">Tools</span>
<span class="t" style="left:421.30px;top:26.49px;font-size:12.5px;color:#fff;letter-spacing:-0.362px;">Manage</span>
<span class="t" style="left:484.00px;top:26.49px;font-size:12.5px;color:#fff;letter-spacing:-0.467px;">View</span>
<span class="t" style="left:529.00px;top:26.49px;font-size:12.5px;color:#fff;letter-spacing:-0.285px;">Environments</span>
<span class="t" style="left:622.00px;top:26.49px;font-size:12.5px;color:#fff;letter-spacing:-0.602px;">Get Started</span>
<span class="t" style="left:700.00px;top:26.49px;font-size:12.5px;color:#fff;letter-spacing:-0.053px;">Vault</span>
<span class="t" style="left:747.30px;top:26.49px;font-size:12.5px;color:#fff;letter-spacing:-0.504px;">Autodesk 360</span>
<div class="b" style="left:829px;top:24px;width:95px;height:19px;background:linear-gradient(#f6fbf2,#dcefd0);border:1.5px solid #6cd038;border-bottom:none;box-sizing:border-box;border-radius:3px 3px 0 0;"></div>
<span class="t" style="left:838.30px;top:26.49px;font-size:12.5px;color:#1e1e32;letter-spacing:-0.604px;">Stress Analysis</span>
<svg class="b" style="left:944px;top:27px" width="30" height="12" viewBox="944 27 30 12"><rect x="945.5" y="29" width="14" height="7.5" rx="2" fill="#f4f4f4"/><path d="M949.5 34.5h6l-3-3.5z" fill="#333"/><path d="M964 32h6l-3 3.5z" fill="#e8e8e8"/></svg>
<div class="b" style="left:1315px;top:0px;width:483px;height:23px;background:linear-gradient(#808080 0,#6e6e6e 40%,#5a5a5a 60%,#4e4e4e 100%);border-radius:0 0 4px 4px;"></div>
<svg class="b" style="left:1318px;top:6px" width="8" height="10" viewBox="0 0 8 10"><path d="M1.5 1v8l5-4z" fill="#000"/></svg>
<div class="b" style="left:1330px;top:1px;width:179px;height:21px;background:#f2f2f2;border:1px solid #888;box-sizing:border-box;box-shadow:inset 0 1px 2px #bbb;"></div>
<span class="t" style="left:1333.50px;top:7.91px;font-size:11.5px;color:#8a8a8a;letter-spacing:-0.483px;font-style:italic;">Type a keyword or phrase</span>
<svg class="b" style="left:1500px;top:0" width="300" height="23" viewBox="1500 0 300 23"><g fill="#f4f4f4" stroke="#1a1a1a" stroke-width=".8"><path d="M1513.5 19v-6l2-6.5q2-1.5 4 0l1.5 6.5v6zM1522.5 19v-6l1.5-6.5q2-1.5 4 0l2 6.5v6z"/><rect x="1519.5" y="9.5" width="4.5" height="3.5" fill="#ddd"/></g><g fill="#f4f4f4" stroke="#1a1a1a" stroke-width=".8"><path d="M1540.5 4a4.8 4.8 0 1 0 3 8.5l1.5 1.5h2v2h2v2l2 1.5h2.5v-2.5l-8-8a4.8 4.8 0 0 0-5-5z"/></g><circle cx="1541.5" cy="7" r="1.3" fill="#3a3a3a"/><g fill="#f4f4f4" stroke="#1a1a1a" stroke-width=".8"><path d="M1563.5 6.5q-1 6 3 9q4 3 9.5 1z"/><path d="M1567 16.5l-3 3h9l-2.5-3.5z"/></g><path d="M1570 11l5.5-6" stroke="#f4f4f4" stroke-width="1.4"/><circle cx="1575.5" cy="5" r="1.3" fill="#f4f4f4"/><path d="M1593.5 4l2.300 5.200l5.700.5l-4.300 3.700l1.300 5.600l-5-3l-5 3l1.300-5.600l-4.300-3.700l5.700-.5z" fill="#fff" stroke="#333" stroke-width=".7"/><g fill="#f4f4f4" stroke="#333" stroke-width=".7"><path d="M1610.5 19q0-5 4.5-6h5q4.5 1 4.5 6z"/><ellipse cx="1617.5" cy="9" rx="3.800" ry="4.8"/></g><path d="M1715 11.5h6l-3 3.5z" fill="#333"/><path d="M1731 6h4.5l2.5 3.5l3.5-3.5h3.5l-5.5 6l5 6.5h-4.5l-2.5-3.5l-3.5 3.5h-3.5l5.5-6z" fill="#2a4ab0" stroke="#dfe8ff" stroke-width=".8"/><path d="M1755.5 3v17" stroke="#4a4a4a"/><path d="M1756.5 3v17" stroke="#8a8a8a"/><circle cx="1773" cy="12" r="7.3" fill="#fff" stroke="#2a3a7a" stroke-width="1.4"/><path d="M1787.5 11.5h6l-3 3.5z" fill="#333"/></svg>
<span class="t" style="left:1769.18px;top:4.99px;font-size:12.5px;color:#1a2a80;font-weight:bold;">?</span>
<span class="t" style="left:1630.70px;top:6.49px;font-size:12.5px;color:#fff;letter-spacing:-0.417px;">Sign In</span>
<div class="b" style="left:1813px;top:0px;width:105px;height:18px;border:1px solid #1a1a1a;border-top:none;border-radius:0 0 5px 5px;box-sizing:border-box;background:linear-gradient(#8a8f96,#5a5f66 45%,#2a2d32 50%,#4a4d52);box-shadow:0 0 0 1px rgba(255,255,255,.35);"></div>
<div class="b" style="left:1870px;top:0px;width:47px;height:17px;border-radius:0 0 4px 0;background:linear-gradient(#e8a090,#d06a50 45%,#b82a10 50%,#d05a30);border-left:1px solid #3a1a1a;"></div>
<div class="b" style="left:1842px;top:0px;width:1px;height:17px;background:#1e1e1e;"></div>
<svg class="b" style="left:1813px;top:0" width="105" height="18" viewBox="1813 0 105 18"><rect x="1823" y="9" width="11" height="3.5" fill="#fff" stroke="#333" stroke-width=".7"/><g fill="none" stroke="#fff" stroke-width="1.800"><rect x="1850.5" y="6.5" width="7" height="6"/><path d="M1853.5 6v-2.5h7.5v6.5h-3"/></g><path d="M1889 4.5l9.5 7.5M1898.5 4.5l-9.5 7.5" stroke="#fff" stroke-width="3" fill="none"/></svg>
<div class="b" style="left:0px;top:43px;width:1506px;height:93px;background:#ffffff;"></div>
<div class="b" style="left:1506px;top:43px;width:414px;height:93px;background:linear-gradient(#cfe6c4 0%,#b9c7b3 40%,#9a9f98 75%,#8c8e8b 100%);"></div>
<div class="b" style="left:0px;top:136px;width:1920px;height:1px;background:#8f8f8f;"></div>
<div class="b" style="left:0px;top:118px;width:129px;height:18px;background:linear-gradient(#cfe6c2,#e4f2dc);"></div>
<span class="t" style="left:43.00px;top:120.45px;font-size:12px;color:#23233d;letter-spacing:-0.061px;">Manage</span>
<div class="b" style="left:129.5px;top:43px;width:1px;height:93px;background:#b6c4b0;"></div>
<div class="b" style="left:133px;top:118px;width:50px;height:18px;background:linear-gradient(#cfe6c2,#e4f2dc);"></div>
<span class="t" style="left:136.00px;top:120.45px;font-size:12px;color:#23233d;letter-spacing:0.040px;">Material</span>
<div class="b" style="left:183.5px;top:43px;width:1px;height:93px;background:#b6c4b0;"></div>
<div class="b" style="left:187px;top:118px;width:129px;height:18px;background:linear-gradient(#cfe6c2,#e4f2dc);"></div>
<span class="t" style="left:221.50px;top:120.45px;font-size:12px;color:#23233d;letter-spacing:-0.154px;">Constraints</span>
<div class="b" style="left:316.5px;top:43px;width:1px;height:93px;background:#b6c4b0;"></div>
<div class="b" style="left:320px;top:118px;width:166px;height:18px;background:linear-gradient(#cfe6c2,#e4f2dc);"></div>
<span class="t" style="left:381.00px;top:120.45px;font-size:12px;color:#23233d;letter-spacing:-0.739px;">Loads</span>
<div class="b" style="left:486.5px;top:43px;width:1px;height:93px;background:#b6c4b0;"></div>
<div class="b" style="left:490px;top:118px;width:88px;height:18px;background:linear-gradient(#cfe6c2,#e4f2dc);"></div>
<span class="t" style="left:510.25px;top:120.45px;font-size:12px;color:#23233d;letter-spacing:-0.107px;">Contacts</span>
<div class="b" style="left:578.5px;top:43px;width:1px;height:93px;background:#b6c4b0;"></div>
<div class="b" style="left:582px;top:118px;width:147px;height:18px;background:linear-gradient(#cfe6c2,#e4f2dc);"></div>
<span class="t" style="left:633.50px;top:120.45px;font-size:12px;color:#23233d;letter-spacing:0.044px;">Prepare</span>
<div class="b" style="left:729.5px;top:43px;width:1px;height:93px;background:#b6c4b0;"></div>
<div class="b" style="left:733px;top:118px;width:89px;height:18px;background:linear-gradient(#cfe6c2,#e4f2dc);"></div>
<span class="t" style="left:762.25px;top:120.45px;font-size:12px;color:#23233d;letter-spacing:0.039px;">Mesh</span>
<div class="b" style="left:822.5px;top:43px;width:1px;height:93px;background:#b6c4b0;"></div>
<div class="b" style="left:826px;top:118px;width:53px;height:18px;background:linear-gradient(#cfe6c2,#e4f2dc);"></div>
<span class="t" style="left:838.00px;top:120.45px;font-size:12px;color:#23233d;letter-spacing:-0.404px;">Solve</span>
<div class="b" style="left:879.5px;top:43px;width:1px;height:93px;background:#b6c4b0;"></div>
<div class="b" style="left:883px;top:118px;width:102px;height:18px;background:linear-gradient(#cfe6c2,#e4f2dc);"></div>
<span class="t" style="left:917.00px;top:120.45px;font-size:12px;color:#23233d;letter-spacing:-0.169px;">Result</span>
<div class="b" style="left:985.5px;top:43px;width:1px;height:93px;background:#b6c4b0;"></div>
<div class="b" style="left:989px;top:118px;width:253px;height:18px;background:linear-gradient(#cfe6c2,#e4f2dc);"></div>
<span class="t" style="left:1095.75px;top:120.45px;font-size:12px;color:#23233d;letter-spacing:-0.121px;">Display</span>
<div class="b" style="left:1242.5px;top:43px;width:1px;height:93px;background:#b6c4b0;"></div>
<div class="b" style="left:1246px;top:118px;width:42px;height:18px;background:linear-gradient(#cfe6c2,#e4f2dc);"></div>
<span class="t" style="left:1249.00px;top:120.45px;font-size:12px;color:#23233d;letter-spacing:-0.170px;">Report</span>
<div class="b" style="left:1288.5px;top:43px;width:1px;height:93px;background:#b6c4b0;"></div>
<div class="b" style="left:1292px;top:118px;width:39px;height:18px;background:linear-gradient(#cfe6c2,#e4f2dc);"></div>
<span class="t" style="left:1295.75px;top:120.45px;font-size:12px;color:#23233d;letter-spacing:-0.304px;">Guide</span>
<div class="b" style="left:1331.5px;top:43px;width:1px;height:93px;background:#b6c4b0;"></div>
<div class="b" style="left:1335px;top:118px;width:83px;height:18px;background:linear-gradient(#cfe6c2,#e4f2dc);"></div>
<span class="t" style="left:1355.00px;top:120.45px;font-size:12px;color:#23233d;letter-spacing:-0.170px;">Settings</span>
<div class="b" style="left:1418.5px;top:43px;width:1px;height:93px;background:#b6c4b0;"></div>
<div class="b" style="left:1422px;top:118px;width:83px;height:18px;background:linear-gradient(#c6e6e0,#dcf2ee);"></div>
<span class="t" style="left:1454.00px;top:120.45px;font-size:12px;color:#23233d;letter-spacing:-0.501px;">Exit</span>
<svg class="b" style="left:416px;top:124px" width="10" height="6" viewBox="0 0 10 6"><path d="M1 0.5h8l-4 4.5z" fill="#333"/></svg>
<span class="t" style="left:17.20px;top:83.95px;font-size:12px;color:#23233d;letter-spacing:-0.336px;">Create</span>
<span class="t" style="left:5.00px;top:98.95px;font-size:12px;color:#23233d;letter-spacing:-0.003px;">Simulation</span>
<span class="t" style="left:67.80px;top:83.95px;font-size:12px;color:#23233d;letter-spacing:-0.101px;">Parametric</span>
<span class="t" style="left:83.00px;top:98.95px;font-size:12px;color:#23233d;letter-spacing:-0.138px;">Table</span>
<span class="t" style="left:139.75px;top:83.95px;font-size:12px;color:#23233d;letter-spacing:-0.253px;">Assign</span>
<span class="t" style="left:191.80px;top:83.95px;font-size:12px;color:#23233d;letter-spacing:-0.469px;">Fixed</span>
<span class="t" style="left:325.10px;top:83.95px;font-size:12px;color:#23233d;letter-spacing:-0.335px;">Force</span>
<span class="t" style="left:361.20px;top:83.95px;font-size:12px;color:#23233d;letter-spacing:-0.502px;">Pressure</span>
<span class="t" style="left:585.25px;top:83.95px;font-size:12px;color:#23233d;letter-spacing:-0.034px;">Find Thin</span>
<span class="t" style="left:593.55px;top:98.95px;font-size:12px;color:#23233d;letter-spacing:-0.365px;">Bodies</span>
<span class="t" style="left:736.25px;top:83.95px;font-size:12px;color:#23233d;letter-spacing:-0.219px;">Mesh View</span>
<span class="t" style="left:829.00px;top:83.95px;font-size:12px;color:#23233d;letter-spacing:-0.086px;">Simulate</span>
<span class="t" style="left:1249.25px;top:83.95px;font-size:12px;color:#23233d;letter-spacing:-0.253px;">Report</span>
<span class="t" style="left:1295.45px;top:83.95px;font-size:12px;color:#23233d;letter-spacing:-0.304px;">Guide</span>
<span class="t" style="left:1338.00px;top:83.95px;font-size:12px;color:#23233d;letter-spacing:-0.358px;">Stress Analysis</span>
<span class="t" style="left:1355.25px;top:98.95px;font-size:12px;color:#23233d;letter-spacing:-0.232px;">Settings</span>
<span class="t" style="left:1447.25px;top:83.95px;font-size:12px;color:#23233d;letter-spacing:-0.252px;">Finish</span>
<span class="t" style="left:1425.00px;top:98.95px;font-size:12px;color:#23233d;letter-spacing:-0.358px;">Stress Analysis</span>
<span class="t" style="left:251.00px;top:49.95px;font-size:12px;color:#23233d;letter-spacing:0.052px;">Pin</span>
<span class="t" style="left:251.00px;top:73.95px;font-size:12px;color:#23233d;letter-spacing:-0.140px;">Frictionless</span>
<span class="t" style="left:434.30px;top:49.95px;font-size:12px;color:#23233d;letter-spacing:-0.309px;">Bearing</span>
<span class="t" style="left:434.30px;top:73.95px;font-size:12px;color:#23233d;letter-spacing:0.442px;">Moment</span>
<span class="t" style="left:434.30px;top:97.95px;font-size:12px;color:#23233d;letter-spacing:-0.186px;">Gravity</span>
<span class="t" style="left:516.00px;top:73.95px;font-size:12px;color:#23233d;letter-spacing:0.107px;">Manual</span>
<span class="t" style="left:664.30px;top:49.95px;font-size:12px;color:#23233d;letter-spacing:0.001px;">Midsurface</span>
<span class="t" style="left:664.30px;top:73.95px;font-size:12px;color:#23233d;letter-spacing:-0.065px;">Offset</span>
<span class="t" style="left:909.30px;top:49.95px;font-size:12px;color:#23233d;letter-spacing:0.097px;">Animate</span>
<span class="t" style="left:909.30px;top:73.95px;font-size:12px;color:#23233d;letter-spacing:-0.204px;">Probe</span>
<span class="t" style="left:909.30px;top:97.95px;font-size:12px;color:#23233d;letter-spacing:-0.153px;">Convergence</span>
<span class="t" style="left:1015.20px;top:49.95px;font-size:12px;color:#23233d;letter-spacing:-0.590px;">Same Scale</span>
<span class="t" style="left:1015.20px;top:73.95px;font-size:12px;color:#23233d;letter-spacing:-0.209px;">Color Bar</span>
<span class="t" style="left:1015.20px;top:97.95px;font-size:12px;color:#23233d;letter-spacing:-0.310px;">Probe Labels</span>
<span class="t" style="left:1136.80px;top:51.45px;font-size:12px;color:#23233d;letter-spacing:-0.088px;">Smooth Shading</span>
<span class="t" style="left:516.00px;top:49.95px;font-size:12px;color:#b4b6c8;letter-spacing:0.272px;">Automatic</span>
<div class="b" style="left:1132px;top:70px;width:100px;height:22px;background:#f2f2f2;border:1px solid #d8d8d8;box-sizing:border-box;"></div>
<span class="t" style="left:1139.30px;top:73.95px;font-size:12px;color:#23233d;letter-spacing:-0.246px;">Adjusted x1</span>
<svg class="b" style="left:1221px;top:78px" width="10" height="6" viewBox="0 0 10 6"><path d="M1 0.5h8l-4 4.5z" fill="#333"/></svg>
<svg class="b" style="left:1231px;top:55px" width="6" height="5" viewBox="0 0 6 5"><path d="M0.5 0.5h5l-2.500 3.500z" fill="#333"/></svg>
<div class="b" style="left:797px;top:46px;width:24px;height:22px;background:#ececec;border:1px solid #d2d2d2;box-sizing:border-box;"></div>
<div class="b" style="left:797px;top:70px;width:24px;height:22px;background:#ececec;border:1px solid #d2d2d2;box-sizing:border-box;"></div>
<div class="b" style="left:797px;top:94px;width:24px;height:22px;background:#ececec;border:1px solid #d2d2d2;box-sizing:border-box;"></div>
<div class="b" style="left:1088px;top:46px;width:25px;height:22px;background:#ececec;border:1px solid #d2d2d2;box-sizing:border-box;"></div>
<div class="b" style="left:1088px;top:70px;width:25px;height:22px;background:#ececec;border:1px solid #d2d2d2;box-sizing:border-box;"></div>
<div class="b" style="left:1088px;top:94px;width:24px;height:22px;background:#c4dcf2;border:1px solid #3a8ad8;box-sizing:border-box;"></div>
<svg class="b" style="left:0;top:43px" width="1506" height="75" viewBox="0 43 1506 75"><defs><linearGradient id="rbh" x1="0" y1="0" x2="1" y2="0"><stop offset="0" stop-color="#2060ff"/><stop offset="0.3" stop-color="#20d0e0"/><stop offset="0.5" stop-color="#40d040"/><stop offset="0.75" stop-color="#f0e020"/><stop offset="1" stop-color="#f03020"/></linearGradient><linearGradient id="rbv" x1="0" y1="0" x2="0" y2="1"><stop offset="0" stop-color="#f03020"/><stop offset="0.3" stop-color="#f0d020"/><stop offset="0.6" stop-color="#40d060"/><stop offset="1" stop-color="#2070ff"/></linearGradient><radialGradient id="hot" cx="0.75" cy="0.4" r="0.8"><stop offset="0" stop-color="#f03020"/><stop offset="0.25" stop-color="#f07020"/><stop offset="0.45" stop-color="#f0e030"/><stop offset="0.65" stop-color="#40d060"/><stop offset="0.85" stop-color="#20b0f0"/><stop offset="1" stop-color="#2050e0"/></radialGradient><radialGradient id="hot2" cx="0.25" cy="0.3" r="0.9"><stop offset="0" stop-color="#e83020"/><stop offset="0.3" stop-color="#f08020"/><stop offset="0.5" stop-color="#f0e030"/><stop offset="0.7" stop-color="#40d060"/><stop offset="0.9" stop-color="#20a0f0"/><stop offset="1" stop-color="#2050e0"/></radialGradient><linearGradient id="rbh2" x1="0" y1="0" x2="1" y2="0"><stop offset="0" stop-color="#f05020"/><stop offset="0.3" stop-color="#f0c020"/><stop offset="0.55" stop-color="#40c040"/><stop offset="0.8" stop-color="#20a0e0"/><stop offset="1" stop-color="#2050e0"/></linearGradient><radialGradient id="hot3" cx="0.1" cy="0.9" r="1.15"><stop offset="0" stop-color="#f02010"/><stop offset="0.2" stop-color="#f08010"/><stop offset="0.33" stop-color="#f0e020"/><stop offset="0.48" stop-color="#30d040"/><stop offset="0.62" stop-color="#20c0f0"/><stop offset="0.8" stop-color="#2040f0"/><stop offset="1" stop-color="#1010c0"/></radialGradient><linearGradient id="meshg" x1="0" y1="0" x2="1" y2="1"><stop offset="0" stop-color="#7aa8e0"/><stop offset="1" stop-color="#b8d0ee"/></linearGradient><linearGradient id="chk" x1="0" y1="0" x2="0" y2="1"><stop offset="0" stop-color="#6ab04a"/><stop offset="1" stop-color="#3a7a24"/></linearGradient><linearGradient id="gold" x1="0" y1="0" x2="1" y2="1"><stop offset="0" stop-color="#fff6a0"/><stop offset="0.5" stop-color="#f0c818"/><stop offset="1" stop-color="#c08a08"/></linearGradient></defs><path d="M19 66h16v-13h9v24h-25z" fill="url(#hot)" stroke="#3a3a4a" stroke-width="1"/><path d="M18 51l12.5 12.5" stroke="#333" stroke-width="1.5"/><path d="M33 66l-7.5-2l5.5-5.5z" fill="#333"/><g stroke="#f03010" stroke-width="1.2"><path d="M41.5 50v10M36.5 55h10M38 51.5l7 7M45 51.5l-7 7"/></g><circle cx="41.5" cy="55" r="2.6" fill="#ffe040" stroke="#f08010" stroke-width=".8"/><path d="M81.5 50v28M110.5 50v28" stroke="#333" stroke-width="1.2"/><path d="M83 55.5h26" stroke="#333" stroke-width="1.1"/><path d="M82 55.5l4-2.5v5zM110 55.5l-4-2.5v5z" fill="#333"/><rect x="85.5" y="61.5" width="21" height="16" fill="#f6f6f6" stroke="#444" stroke-width="1"/><rect x="86" y="62" width="20" height="3" fill="#6a6a6a"/><path d="M85.5 69.5h21M85.5 73.5h21M92.5 65v12.5M99.5 65v12.5" stroke="#999" stroke-width=".8"/><g fill="none" stroke="#3a3a3a" stroke-width="1.3"><ellipse cx="157.5" cy="65" rx="14.5" ry="6.5" transform="rotate(20 157.5 65)"/><ellipse cx="157.5" cy="65" rx="15" ry="6" transform="rotate(65 157.5 65)"/><circle cx="158" cy="66" r="4.5" fill="#f4f4f4"/><circle cx="158.5" cy="66" r="2.2"/></g><circle cx="152" cy="52.5" r="1.8" fill="#fff" stroke="#333"/><circle cx="145" cy="62.5" r="1.8" fill="#fff" stroke="#333"/><circle cx="165" cy="77" r="1.8" fill="#fff" stroke="#333"/><path d="M191.5 60.5h12q5 0 9 4.5l-3.5 4.5q-3-3.5-7-3.5h-10.5z" fill="#e8e8e8" stroke="#444" stroke-width="1"/><path d="M215.5 60.5h5M218 60.5v5.5M215.5 66h5" stroke="#333" stroke-width="1"/><circle cx="241" cy="57" r="4.8" fill="#e4e4e4" stroke="#444" stroke-width="1.1"/><path d="M235 49.5q-4 7.5 0 15" fill="none" stroke="#222" stroke-width="1.1"/><path d="M233 50.5l3.5-2v3.5zM233 63.5l3.5 2v-3.5z" fill="#222"/><rect x="231.5" y="76.5" width="14" height="4" fill="#dcdcdc" stroke="#444" stroke-width="1"/><path d="M232 85.5h13" stroke="#222" stroke-width="1.1"/><path d="M230.5 85.5l3.5-2.5v5zM246.5 85.5l-3.5-2.5v5z" fill="#222"/><rect x="325" y="63" width="28" height="4.5" fill="#9aa0b0" stroke="#3a3a4a" stroke-width="1"/><path d="M339 69l7 7.5h-14z" fill="#e8e8e8" stroke="#555" stroke-width="1"/><path d="M330 50v9" stroke="#000" stroke-width="1.4"/><path d="M326.5 57.5h7l-3.5 4.5z" fill="#000"/><path d="M348.5 50v9" stroke="#1c8cf0" stroke-width="1.4"/><path d="M345 57.5h7l-3.5 4.5z" fill="#1c8cf0"/><rect x="369.5" y="61.5" width="27.5" height="4.5" fill="#9aa0b0" stroke="#3a3a4a" stroke-width="1"/><path d="M374 49.5v8M374 77v-7" stroke="#000" stroke-width="1.4"/><path d="M370.5 56h7l-3.5 4.5zM370.5 71.5h7l-3.5-4.5z" fill="#000"/><path d="M392.5 49.5v8M392.5 77v-7" stroke="#1c8cf0" stroke-width="1.4"/><path d="M389 56h7l-3.5 4.5zM389 71.5h7l-3.5-4.5z" fill="#1c8cf0"/><circle cx="421" cy="57" r="4.6" fill="none" stroke="#333" stroke-width="1.2"/><circle cx="421" cy="57" r="2.3" fill="none" stroke="#333" stroke-width="1"/><path d="M413.5 49.5l3.5 3.5M428.5 49.5l-3.5 3.5" stroke="#000" stroke-width="1.1"/><path d="M413.5 64.5l3.5-3.5M428.5 64.5l-3.5-3.5" stroke="#1c8cf0" stroke-width="1.1"/><path d="M415.5 76a6.5 6.5 0 1 1 5 9.5" fill="none" stroke="#222" stroke-width="1.3"/><path d="M417.5 86l5-2.5v5z" fill="#222"/><path d="M421 101q-7-3-7 4q0 8 5 8.5q2 .3 2-.5q0 .8 2 .5q5-.5 5-8.5q0-7-7-4z" fill="#e8d838" stroke="#8a7a10" stroke-width=".8"/><path d="M421 101q-.5-2.5 1.5-3.5" stroke="#5a4010" fill="none"/><path d="M421 99q-3-3-5 0q3 2 5 0z" fill="#50a030"/><g fill="none" stroke="#c0c2cc" stroke-width="1.1"><rect x="496.5" y="52.5" width="7" height="5"/><rect x="500.5" y="57.5" width="8" height="5"/><path d="M497 50q5-3 10 0M498 65q5 3 10 0"/></g><rect x="496" y="81.5" width="6.5" height="4.5" fill="#fff" stroke="#2040a0" stroke-width="1"/><rect x="502.5" y="81.5" width="7" height="4.5" fill="#a0c0e8" stroke="#2040a0" stroke-width="1"/><g stroke="#f03010" stroke-width="1"><path d="M507.5 73.5v7M504 77h7M505 74.5l5 5M510 74.5l-5 5"/></g><circle cx="507.5" cy="77" r="1.5" fill="#ffe040"/><path d="M595 76v-20l5-7q4-1 7 4l5 10v6l-5-6l-7-5z" fill="url(#gold)" stroke="#3a3a3a" stroke-width="1.1" stroke-linejoin="round"/><path d="M600 49l5-1q4 1 7 7l12-2l-7 8l-5 2l-5-10q-3-5-7-4z" fill="#fff2a0" stroke="#3a3a3a" stroke-width="1" stroke-linejoin="round"/><circle cx="614.5" cy="67.5" r="6.5" fill="#eef4f8" stroke="#555" stroke-width="1.4"/><path d="M619.5 72.5l5.5 5.5" stroke="#444" stroke-width="2.6"/><path d="M643.5 56l3-3h12l-3 3zM643.5 61l3-3h12l-3 3z" fill="#f0dc50" stroke="#2a3a7a" stroke-width="1"/><path d="M643.5 58.5l3-3h12l-3 3z" fill="#80b0f0" stroke="#2a3a7a" stroke-width=".8"/><path d="M643 80q8-4 11-4M643 83q8-4 11-4M643 86q8-4 11-4" fill="none" stroke="#2a3a7a" stroke-width="1.2"/><path d="M643 81.5q8-4 11-4M643 84.5q8-4 11-4" fill="none" stroke="#f0dc50" stroke-width="1.3"/><path d="M657.5 75.5v8" stroke="#f02010" stroke-width="1.1"/><path d="M655.5 77l2-2.5l2 2.5zM655.5 82l2 2.5l2-2.5z" fill="#f02010"/><path d="M749.5 49.5h12.5v15h15v13h-27.5z" fill="url(#meshg)" stroke="#1c3ca8" stroke-width="1.4"/><path d="M750 58l12 8l-12 11M762 50l-8 27M754 50l8 15l15 8M762 65l5 12l5-12" fill="none" stroke="#4a90f0" stroke-width=".8"/><path d="M801.5 49.5h6v13h-6z" fill="url(#meshg)" stroke="#1c3ca8" stroke-width="1.1"/><rect x="810.5" y="56.5" width="6.5" height="7.5" fill="#fff" stroke="#444" stroke-width=".9"/><path d="M812 58.5h3.5" stroke="#2050c0" stroke-width="1.2"/><path d="M812 61.5h3.5" stroke="#444" stroke-width=".8"/><path d="M801.5 73.5h5v8h9.5v6h-14.5z" fill="url(#meshg)" stroke="#1c3ca8" stroke-width="1.2"/><g stroke="#f03010" stroke-width=".9"><path d="M813.5 73v7M810 76.5h7M811 74l5 5M816 74l-5 5"/></g><path d="M802.5 98v13h6" fill="none" stroke="#222" stroke-width="1"/><path d="M801 99.5l1.5-2.5l1.5 2.5z" fill="#222"/><path d="M803.5 109q2-8 9-9" fill="none" stroke="#e02020" stroke-width="1.2"/><rect x="810.5" y="104.5" width="6.5" height="7.5" fill="#fff" stroke="#444" stroke-width=".9"/><path d="M812 106.5h3.5" stroke="#2050c0" stroke-width="1.2"/><path d="M837.5 62.5l13-13h17l-13 13z" fill="url(#rbh2)" stroke="#2a3a5a" stroke-width="1"/><path d="M854.5 62.5l13-13v15l-13 13z" fill="url(#rbh2)" stroke="#2a3a5a" stroke-width="1"/><rect x="837.5" y="62.5" width="17" height="15" fill="#f04040" stroke="#2a3a5a" stroke-width="1"/><g fill="#f2f2f2" stroke="#333" stroke-width="1"><circle cx="892" cy="52.5" r="3"/><circle cx="899.5" cy="51.5" r="3.5"/><rect x="890.5" y="58.5" width="11.5" height="5.5" rx="1"/><path d="M889.5 62.5h13v2.5h-13z"/><path d="M894 56l4 2.5"/></g><path d="M889.5 81h3v-3l2-1.5l2 1.5v3h1v7h-8z" fill="#fff" stroke="#1c2c6c" stroke-width="1"/><rect x="893" y="73.5" width="3" height="6" fill="#2a6ad8" stroke="#1c2c6c" stroke-width=".8"/><path d="M889.5 98v13.5h13" fill="none" stroke="#222" stroke-width="1"/><path d="M888 99.5l1.5-2.5l1.5 2.5zM901.5 110l2.5 1.5l-2.5 1.5z" fill="#222"/><path d="M890.5 109.5q2-9 12-10.5" fill="none" stroke="#e02020" stroke-width="1.2"/><rect x="994.5" y="57.5" width="5" height="6.5" fill="url(#rbv)" stroke="#333" stroke-width=".9"/><rect x="1003.5" y="49.5" width="5.5" height="14.5" fill="url(#rbv)" stroke="#333" stroke-width=".9"/><path d="M994.5 49.5h5M997 50v5" stroke="#222" stroke-width="1"/><path d="M995 53.5h4l-2 2.5z" fill="#222"/><rect x="997.5" y="73.5" width="8.5" height="14.5" rx="1" fill="url(#rbv)" stroke="#333" stroke-width="1"/><path d="M995.5 104h3v-3l1.5-1l1.5 1v3h1v7h-7z" fill="#fff" stroke="#1c2c6c" stroke-width="1"/><rect x="998.5" y="97.5" width="3" height="5.5" fill="#2a6ad8" stroke="#1c2c6c" stroke-width=".8"/><circle cx="1007" cy="106" r="3" fill="#ffc020" stroke="#e08000" stroke-width=".8"/><rect x="1005.5" y="109" width="3" height="3" fill="#ddd" stroke="#555" stroke-width=".6"/><rect x="1094.5" y="49.5" width="13" height="13" fill="url(#hot3)" stroke="#000" stroke-width="1"/><rect x="1092.5" y="57.5" width="6" height="6" fill="#f06020" stroke="#000" stroke-width="1"/><rect x="1091.5" y="56.5" width="8" height="8" fill="none" stroke="#fff" stroke-width=".8"/><rect x="1092.5" y="75.5" width="13" height="13" fill="url(#hot3)" stroke="#000" stroke-width="1"/><rect x="1101.5" y="73.5" width="6" height="6" fill="#2030c0" stroke="#000" stroke-width="1"/><rect x="1100.5" y="72.5" width="8" height="8" fill="none" stroke="#fff" stroke-width=".8"/><path d="M1093 109l5-4l8-4.5l3 .5l-1 2l-7 4l-3 1z" fill="#8a9098" stroke="#5a6068" stroke-width=".8"/><path d="M1093 109l5-4l3 3z" fill="#b0b8c0"/><path d="M1115.5 62v-11q4-2 6.5 4q2 5 6.5 6.5z" fill="#f01010"/><path d="M1115.5 62v-7q4-1 6 4l2 3z" fill="#f0e020"/><path d="M1115.5 62v-4q3 0 4.5 4z" fill="#2030e0"/><path d="M1114 73.5h12.5v12" fill="none" stroke="#3a7ac8" stroke-width="1.3"/><rect x="1114.5" y="77.5" width="7.5" height="7.5" fill="#fff" stroke="#444" stroke-width="1"/><path d="M1124 87.5h6M1124 85h6" stroke="#444" stroke-width="1"/><path d="M1252.5 56.5l7-7h20v20l-7 7h-20z" fill="url(#hot2)" stroke="#3a3a5a" stroke-width="1"/><rect x="1267.5" y="62.5" width="14.5" height="14.5" fill="#f8f8f8" stroke="#555" stroke-width="1.1"/><path d="M1272.5 66.5h7M1272.5 70h7M1272.5 73.5h7" stroke="#333" stroke-width="1.1"/><path d="M1269.5 66.5h1.5M1269.5 70h1.5M1269.5 73.5h1.5" stroke="#333" stroke-width="1.3"/><circle cx="1310.5" cy="63" r="14" fill="#f4f6fa" stroke="#5a6a9a" stroke-width="1.6"/><circle cx="1310.5" cy="63" r="11.5" fill="none" stroke="#8a9ac0" stroke-width="2.5" stroke-dasharray="0.8 1.6"/><path d="M1315 52l-3 12.5l-3.5-3z" fill="#e82020"/><path d="M1306 74.5l2.5-13l3.5 3z" fill="#2050c0"/><rect x="1364.5" y="48.5" width="20" height="29" rx="1" fill="#f6f6f6" stroke="#333" stroke-width="1.2"/><rect x="1367" y="51.5" width="10.5" height="10" fill="#4a78b8" stroke="#2a4a80" stroke-width=".8"/><rect x="1379" y="51.5" width="3" height="10" fill="#b0b0b0"/><path d="M1368 66.5h13M1368 72.5h13" stroke="#333" stroke-width="1"/><path d="M1372 64.5v4M1378.5 70.5v4" stroke="#333" stroke-width="1.6"/><path d="M1448.5 65.5q3-2.5 5.5-1l4 7q8-15 17-22.5q3-.5 3.5 2q-10 10-18 27q-2 2-4.5 0z" fill="url(#chk)" stroke="#2a6a1a" stroke-width="1.2" stroke-linejoin="round"/></svg>
<div class="b" style="left:0px;top:1014px;width:1920px;height:26px;background:linear-gradient(#ffffff 0%,#ffffff 12%,#f0f0f0 22%,#dedede 60%,#c8c8c8 100%);"></div>
<span class="t" style="left:2.00px;top:1021.95px;font-size:12px;color:#000;letter-spacing:-0.138px;">Ready</span>
<div class="b" style="left:1841px;top:1018px;width:1px;height:21px;background:#bcbcbc;"></div>
<div class="b" style="left:1881px;top:1018px;width:1px;height:21px;background:#bcbcbc;"></div>
<div class="b" style="left:1842px;top:1018px;width:1px;height:21px;background:#f4f4f4;"></div>
<div class="b" style="left:1882px;top:1018px;width:1px;height:21px;background:#f4f4f4;"></div>
<span class="t" style="left:1850.30px;top:1022.49px;font-size:12.5px;color:#000;">7</span>
<span class="t" style="left:1888.00px;top:1022.49px;font-size:12.5px;color:#000;">6</span>
<div class="b" style="left:0px;top:1040px;width:1920px;height:40px;background:linear-gradient(#3a3a3a 0,#0c0c0c 3px,#000 50%,#050505 100%);"></div>
<div class="b" style="left:1230px;top:1042px;width:300px;height:36px;background:radial-gradient(ellipse at center,rgba(40,40,40,.6),rgba(0,0,0,0) 70%);"></div>
<div class="b" style="left:122px;top:1042px;width:58px;height:38px;background:linear-gradient(135deg,#5a5a5a,#2a2a2a 48%,#141414 52%,#2c2c2c);border:1px solid #8a8a8a;border-bottom:none;border-radius:3px 3px 0 0;box-sizing:border-box;"></div>
<div class="b" style="left:742px;top:1042px;width:58px;height:38px;background:linear-gradient(135deg,#d8d8d8,#9a9a9a 50%,#7a7a7a 51%,#b0b0b0);border:1px solid #e0e0e0;border-bottom:none;border-radius:3px 3px 0 0;box-sizing:border-box;"></div>
<div class="b" style="left:928px;top:1042px;width:57px;height:38px;background:linear-gradient(135deg,#5a5a5a,#2a2a2a 48%,#141414 52%,#2c2c2c);border:1px solid #8a8a8a;border-bottom:none;border-radius:3px 3px 0 0;box-sizing:border-box;"></div>
<div class="b" style="left:990px;top:1042px;width:53px;height:38px;background:linear-gradient(135deg,#5a5a5a,#2a2a2a 48%,#141414 52%,#2c2c2c);border:1px solid #8a8a8a;border-bottom:none;border-radius:3px 3px 0 0;box-sizing:border-box;"></div>
<div class="b" style="left:1045px;top:1043px;width:2px;height:37px;background:#5a5a5a;"></div>
<svg class="b" style="left:0;top:1040px" width="1920" height="40" viewBox="0 1040 1920 40"><defs><radialGradient id="orb" cx=".5" cy=".35" r=".7"><stop offset="0" stop-color="#8ad0ff"/><stop offset=".5" stop-color="#2a78d0"/><stop offset="1" stop-color="#0a2a6a"/></radialGradient><radialGradient id="itn" cx=".5" cy=".3" r=".8"><stop offset="0" stop-color="#7ac4ff"/><stop offset=".6" stop-color="#1a78e0"/><stop offset="1" stop-color="#0a3a9a"/></radialGradient><radialGradient id="gold2" cx=".4" cy=".3" r=".8"><stop offset="0" stop-color="#fff6a0"/><stop offset=".5" stop-color="#e8c818"/><stop offset="1" stop-color="#a07808"/></radialGradient><radialGradient id="ut" cx=".4" cy=".3" r=".8"><stop offset="0" stop-color="#a0e060"/><stop offset=".6" stop-color="#58b030"/><stop offset="1" stop-color="#2a7a18"/></radialGradient><radialGradient id="ffx" cx=".45" cy=".4" r=".7"><stop offset="0" stop-color="#ffd040"/><stop offset=".5" stop-color="#f08018"/><stop offset="1" stop-color="#c83808"/></radialGradient><linearGradient id="invt" x1="0" y1="0" x2="1" y2="1"><stop offset="0" stop-color="#f8b870"/><stop offset="1" stop-color="#e07818"/></linearGradient></defs><circle cx="27" cy="1060" r="18.5" fill="url(#orb)" stroke="#0a1a3a" stroke-width="1"/><ellipse cx="27" cy="1050" rx="13" ry="7" fill="#fff" opacity=".25"/><path d="M18 1053q4-2 8 0l-1.5 6q-4-2-8 0z" fill="#f04828"/><path d="M28 1053.5q4 2 8 0l-1.5 6q-4 2-8 0z" fill="#78c030"/><path d="M16 1061q4-2 8 0l-1.5 6q-4-2-8 0z" fill="#2890e8"/><path d="M26 1061.5q4 2 8 0l-1.5 6q-4 2-8 0z" fill="#f8c020"/><path d="M73 1049h9l2 2h14v7h-25z" fill="#e8c868" stroke="#a88838" stroke-width=".8"/><path d="M77 1054h9l2 2h17v20h-28z" fill="#f4dc88" stroke="#b89848" stroke-width=".8"/><path d="M80 1064h23v12h-23z" fill="#88c8f0" stroke="#4a90c8" stroke-width=".8"/><path d="M84 1068h15v8h-15z" fill="#e8f4fc"/><circle cx="151" cy="1060" r="15.5" fill="url(#ffx)" stroke="#a83008" stroke-width=".8"/><circle cx="153" cy="1057" r="8.5" fill="#3a5ad0"/><path d="M140 1052q-3 8 2 15q7 7 16 2q5-4 5-11q-2 6-8 7q-7 1-9-4q3 1 5-1q-5-1-5-6q-3 0-6-2z" fill="#f08018"/><circle cx="213" cy="1060" r="16" fill="#e8eef8" stroke="#6a7a9a" stroke-width="1"/><circle cx="213" cy="1060" r="13.5" fill="url(#itn)"/><path d="M210 1053l8-2v12a2.5 2.5 0 1 1-1.5-2.300v-7l-5 1.300v8.5a2.5 2.5 0 1 1-1.5-2.300z" fill="#fff"/><circle cx="957" cy="1060" r="16" fill="#e8eef8" stroke="#6a7a9a" stroke-width="1"/><circle cx="957" cy="1060" r="13.5" fill="url(#itn)"/><path d="M954 1053l8-2v12a2.5 2.5 0 1 1-1.5-2.300v-7l-5 1.300v8.5a2.5 2.5 0 1 1-1.5-2.300z" fill="#fff"/><circle cx="275" cy="1060" r="16" fill="url(#gold2)" stroke="#b0b0b0" stroke-width="1.5"/><circle cx="275" cy="1060" r="4.5" fill="#fff" stroke="#7a6a10"/><circle cx="275" cy="1060" r="2" fill="#222"/><circle cx="337" cy="1060" r="16" fill="url(#ut)"/><path d="M330 1051v10q0 5 5 5q4 0 4-4v-11M339 1066h6" stroke="#fff" stroke-width="3.5" fill="none"/><path d="M330 1062v12" stroke="#fff" stroke-width="3.5"/><path d="M399 1044l9 26h-18z" fill="#f08818"/><path d="M394.5 1057h9l1.5 4.5h-12zM391.5 1065.5h15l1 3h-17z" fill="#f4f4f4"/><path d="M387 1070h24l2 6h-28z" fill="#e07010"/><circle cx="461" cy="1060" r="16" fill="url(#itn)" stroke="#0a3a8a"/><circle cx="460" cy="1058" r="7.5" fill="none" stroke="#fff" stroke-width="2.5"/><path d="M460 1054v8M456 1058h8" stroke="#fff" stroke-width="2"/><path d="M466 1064l6 6" stroke="#fff" stroke-width="3.5"/><rect x="508" y="1046" width="30" height="28" fill="#1e1e1e" stroke="#3a3a3a"/><path d="M512 1070l12-18h4l-10 18zM527 1070l4-18h4l-3 18zM518 1064h12v3h-12z" fill="#f4f4f4"/><rect x="570" y="1045" width="30" height="30" fill="#d01010"/><path d="M577 1068q-3-8 3-14q0 5 3 6q-1-8 5-12q-1 6 4 10q4 5 1 10q-3 5-9 4q-5-1-7-4z" fill="#f8b010"/><ellipse cx="585.5" cy="1064" rx="4" ry="5" fill="#d01010"/><path d="M632 1056l18-8l12 10l-16 14z" fill="#2a2a2a" stroke="#555" stroke-width=".8"/><path d="M646 1072l16-14v5l-14 13z" fill="#e01818"/><path d="M636 1056l14-6l8 7l-13 7z" fill="#7a1010"/><path d="M693 1046h3v30h-2z" fill="#c8c8c8"/><rect x="698" y="1052" width="26" height="18" fill="#48a848" stroke="#2a782a"/><rect x="707" y="1057" width="9" height="8" fill="#d8d8d8" stroke="#777"/><rect x="700" y="1070" width="16" height="3" fill="#d8b830"/><rect x="700" y="1054" width="4" height="4" fill="#e03030"/><rect x="755" y="1044" width="32" height="33" fill="url(#invt)"/><path d="M764 1048h14v4h-4.5v13h4.5v4h-14v-4h4.5v-13h-4.5z" fill="#c85008"/><rect x="817" y="1045" width="32" height="31" fill="#080808"/><path d="M833 1049q-9 0-9 9q0 5 3 8l1 6h10l1-6q3-3 3-8q0-9-9-9z" fill="#e8e8e8"/><ellipse cx="829" cy="1060" rx="2.5" ry="3" fill="#080808"/><ellipse cx="837" cy="1060" rx="2.5" ry="3" fill="#080808"/><path d="M833 1049v23" stroke="#080808" stroke-width="1.5"/><rect x="879" y="1044" width="32" height="32" rx="5" fill="#2e2e2e"/><circle cx="901" cy="1055" r="5.5" fill="none" stroke="#c8c8c8" stroke-width="2.5"/><circle cx="889" cy="1066" r="4.5" fill="#c8c8c8"/><path d="M879 1060l12 6l7-8" stroke="#c8c8c8" stroke-width="3.5" fill="none"/><rect x="1000" y="1046" width="32" height="9" rx="1.5" fill="#9030a0" stroke="#401050" stroke-width=".7"/><rect x="1001" y="1055.5" width="32" height="9" rx="1.5" fill="#2850d0" stroke="#102060" stroke-width=".7"/><rect x="1000" y="1065" width="32" height="9" rx="1.5" fill="#28a038" stroke="#0a5018" stroke-width=".7"/><rect x="1018" y="1045" width="5" height="30" fill="#d8a830" stroke="#7a5a10" stroke-width=".7"/><rect x="1016.5" y="1056" width="8" height="8" fill="#e8c050" stroke="#7a5a10" stroke-width=".7"/><g transform="translate(0 1.5)"><path d="M1739.5 1063l4-4l4 4z" fill="#f4f4f4"/><path d="M1762.5 1052v15" stroke="#f4f4f4" stroke-width="1.5"/><path d="M1763.5 1053q3-1.5 5 0t5 0v7q-3 1.5-5 0t-5 0z" fill="#f4f4f4"/><rect x="1787.5" y="1055.5" width="10" height="8" fill="none" stroke="#f4f4f4" stroke-width="1.5"/><path d="M1790 1067h6M1793 1064v3M1784.5 1051v9h3" stroke="#f4f4f4" stroke-width="1.300" fill="none"/><rect x="1783" y="1049" width="3.5" height="3" fill="#f4f4f4"/><path d="M1809 1057h3l4-4v14l-4-4h-3z" fill="#f4f4f4"/><path d="M1818.5 1056q2.5 4 0 8M1821 1053.5q4 6.5 0 13" stroke="#f4f4f4" stroke-width="1.200" fill="none"/></g></svg>
<span class="t" style="left:764.96px;top:1069.51px;font-size:6.5px;color:#fff;font-weight:bold;">PRO</span>
<span class="t" style="left:571.50px;top:1068.51px;font-size:6.5px;color:#f8d020;letter-spacing:0.194px;font-weight:bold;">FurMark</span>
<span class="t" style="left:1845.50px;top:1045.95px;font-size:12px;color:#fff;letter-spacing:-0.241px;">8:12 PM</span>
<span class="t" style="left:1838.00px;top:1062.95px;font-size:12px;color:#fff;letter-spacing:-0.117px;">11/03/2014</span>
<div class="b" style="left:1906px;top:1041px;width:13px;height:39px;background:linear-gradient(135deg,#4a4a4a,#161616 60%);border:1px solid #8a8a8a;border-bottom:none;box-sizing:border-box;"></div>
</body></html>
